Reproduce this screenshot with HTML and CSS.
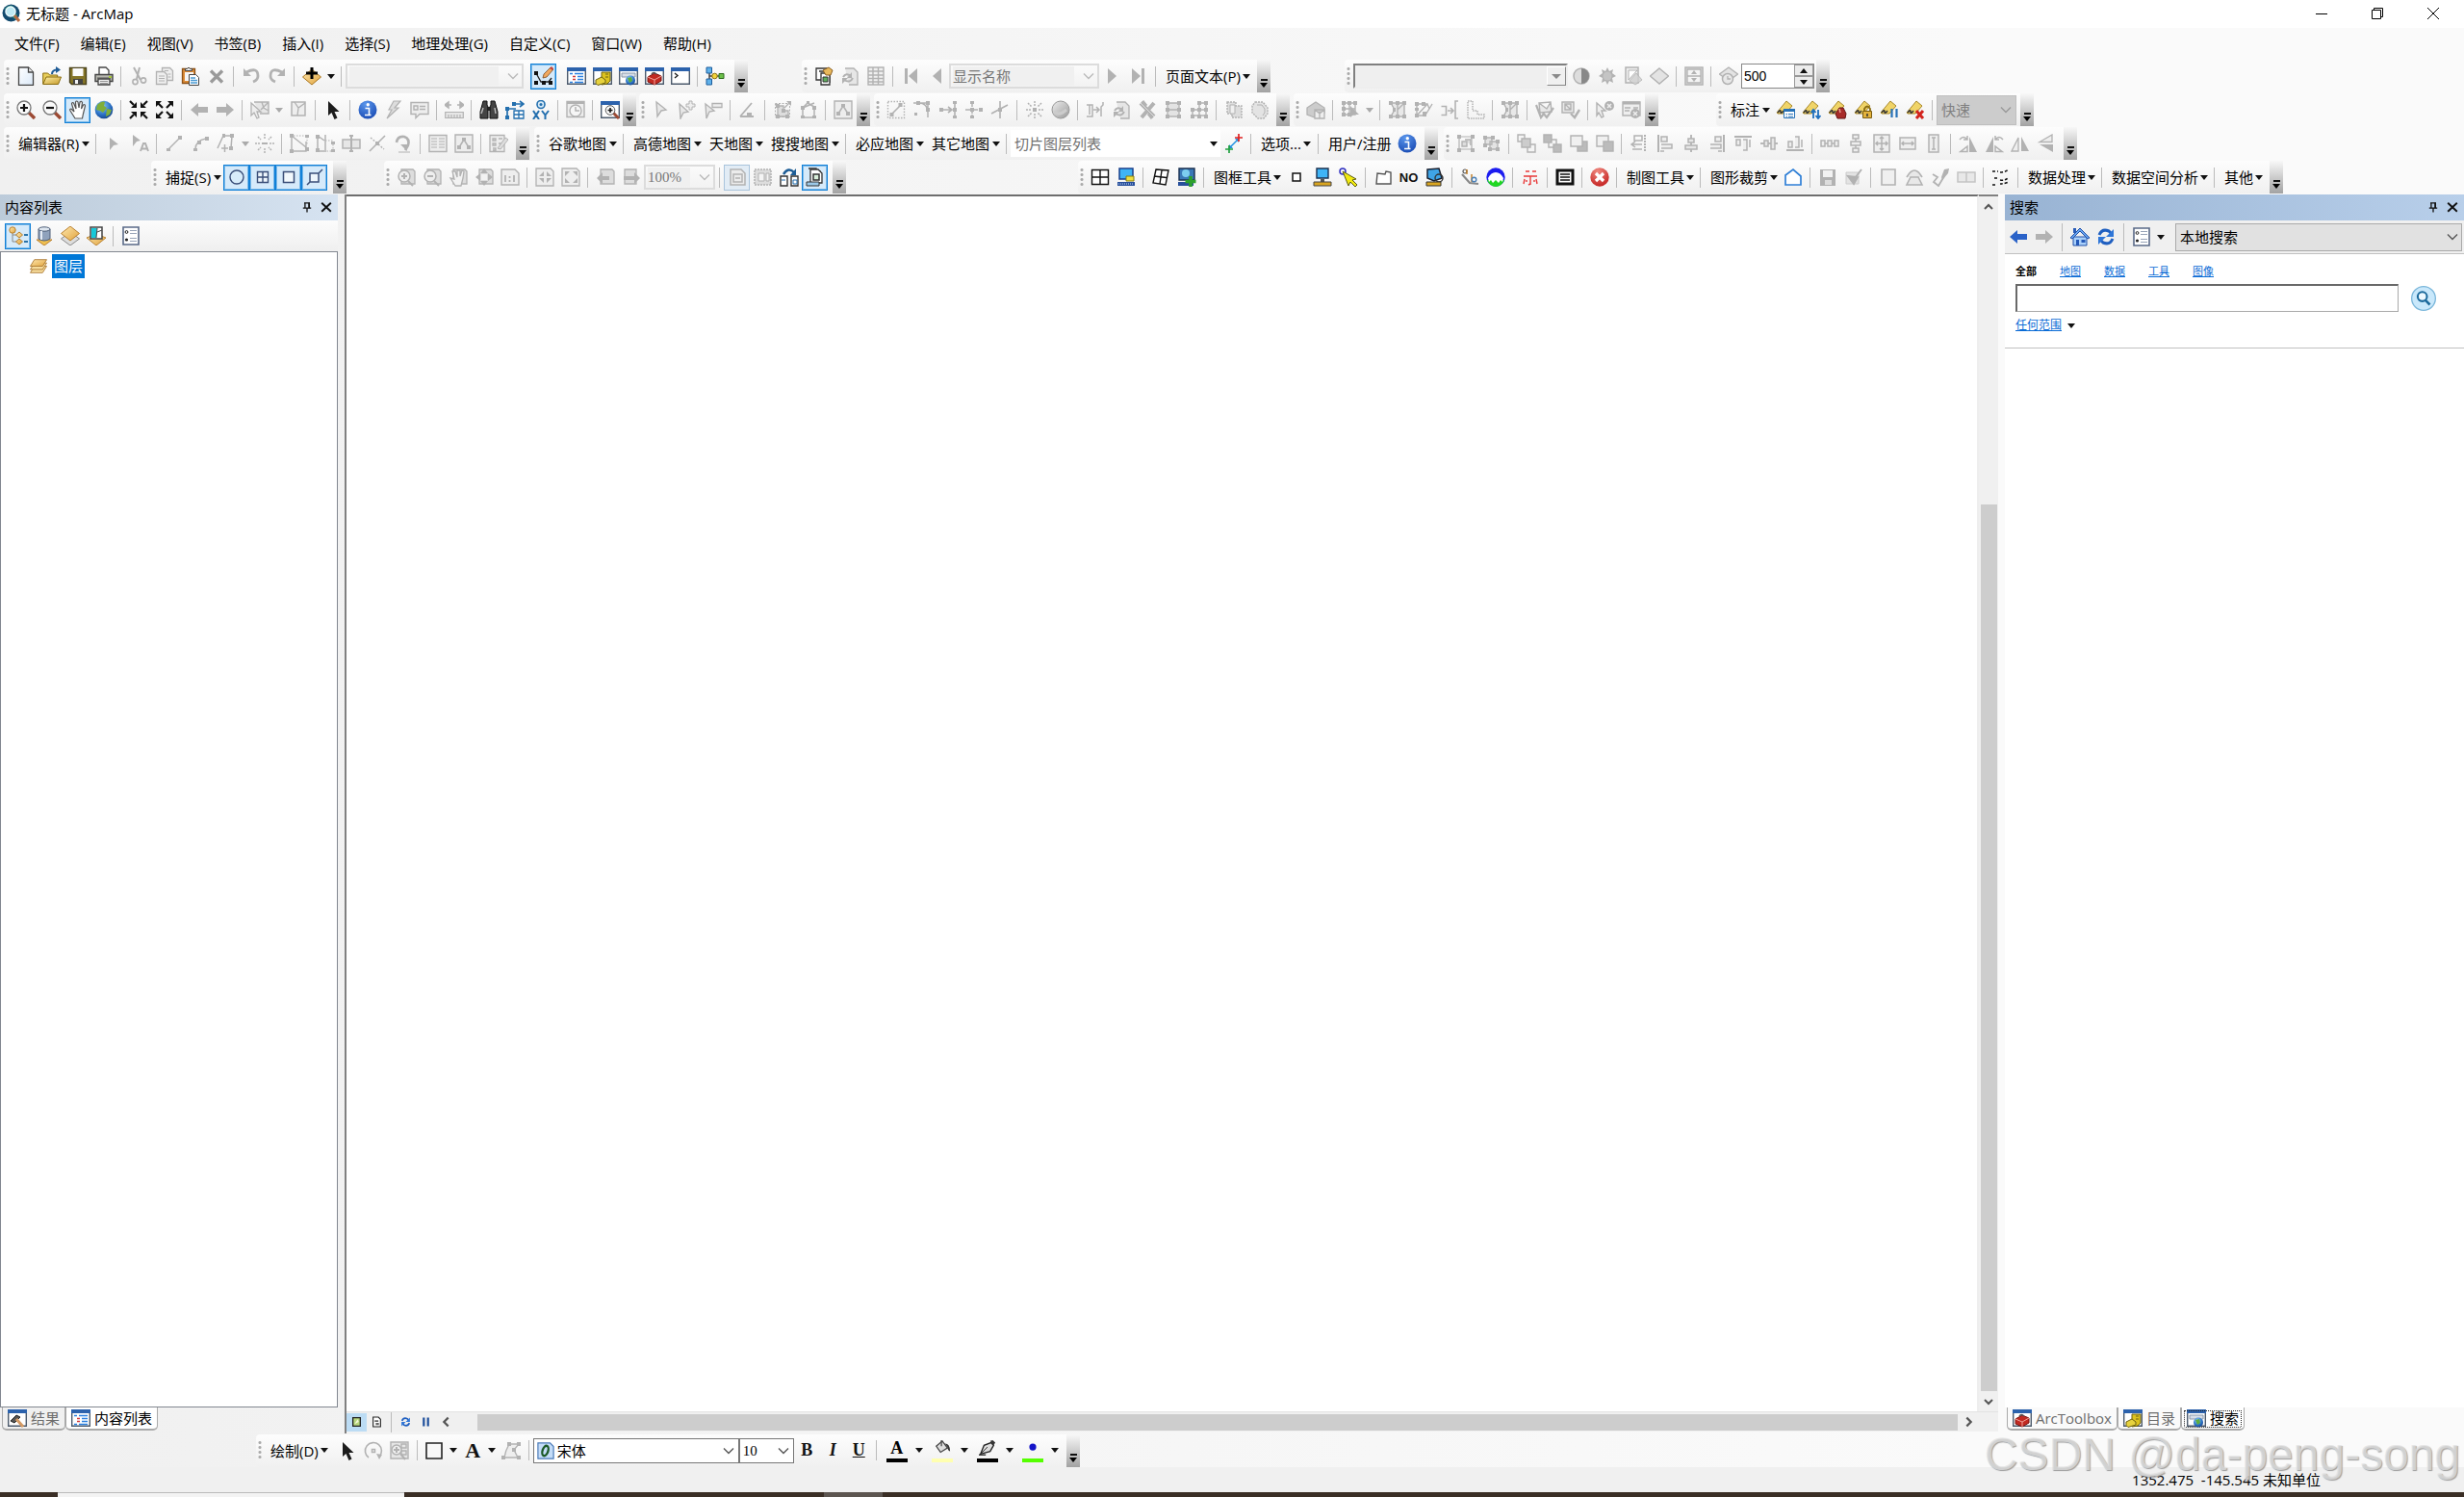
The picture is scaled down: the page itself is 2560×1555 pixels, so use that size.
FILE: index.html
```html
<!DOCTYPE html>
<html lang="zh-CN">
<head>
<meta charset="utf-8">
<title>无标题 - ArcMap</title>
<link rel="stylesheet" href="styles.css">
</head>
<body>
<svg class="defs" aria-hidden="true">
<defs>
<linearGradient id="gold" x1="0" y1="0" x2="1" y2="1"><stop offset="0" stop-color="#fdf0a8"/><stop offset="1" stop-color="#c79a2a"/></linearGradient>
<linearGradient id="sand" x1="0" y1="0" x2="1" y2="1"><stop offset="0" stop-color="#ffe9b0"/><stop offset="1" stop-color="#e0a23c"/></linearGradient>
<linearGradient id="page" x1="0" y1="0" x2="1" y2="1"><stop offset="0" stop-color="#fff"/><stop offset="1" stop-color="#dbe9f8"/></linearGradient>
<linearGradient id="grayfade" x1="0" y1="0" x2="1" y2="1"><stop offset="0" stop-color="#eee"/><stop offset="1" stop-color="#999"/></linearGradient>
<radialGradient id="sea" cx=".4" cy=".3" r=".8"><stop offset="0" stop-color="#8fd0f5"/><stop offset=".6" stop-color="#2a6fc4"/><stop offset="1" stop-color="#123a7c"/></radialGradient>
<radialGradient id="blue" cx=".4" cy=".2" r=".9"><stop offset="0" stop-color="#5a96ec"/><stop offset="1" stop-color="#1546b0"/></radialGradient>
<radialGradient id="red" cx=".4" cy=".2" r=".9"><stop offset="0" stop-color="#f08a80"/><stop offset="1" stop-color="#c01818"/></radialGradient>
</defs>
<symbol id="app" viewBox="0 0 20 20"><circle cx="9.500" cy="9.500" r="9" fill="#124a6e"/><path d="M3 5q4-4 8-3l2 4-4 3-4-1zM12 10l4 1-2 5-3-2z" fill="#2f9a86"/><circle cx="9" cy="8" r="5" fill="#bfe9f3" stroke="#eaf8fb" stroke-width="1.500"/><path d="M13 12l5 6" stroke="#b46a42" stroke-width="3"/></symbol>
<symbol id="new" viewBox="0 0 20 20"><path d="M2.500 1h10l5 5v13.300h-15z" fill="url(#page)" stroke="#444" stroke-width="1.300"/><path d="M12.500 1v5h5" fill="#eee" stroke="#444" stroke-width="1.300"/></symbol>
<symbol id="open" viewBox="0 0 20 20"><path d="M.7 18V7h5l2 2h8v2" fill="#e9cf5b" stroke="#8a6d10"/><path d="M.7 18.500 4 11h15.500l-3 7.500z" fill="url(#gold)" stroke="#8a6d10"/><path d="M14 0l5 3.500-5 3.500z" fill="#1f5c96"/><path d="M10 8q0-4 5-4.500" stroke="#1f5c96" stroke-width="2" fill="none"/></symbol>
<symbol id="save" viewBox="0 0 20 20"><path d="M1.500 1.500h17v17h-15l-2-2z" fill="#857528" stroke="#4b431c" stroke-width="1.400"/><path d="M4.500 2h11v8h-11z" fill="#fbfbfb"/><path d="M5 13h10v5.500H5z" fill="#444"/><path d="M7 14h3v4H7z" fill="#f3f3f3"/></symbol>
<symbol id="print" viewBox="0 0 20 20"><path d="M5 8V1h7l3 3v4" fill="#fff" stroke="#444" stroke-width="1.300"/><path d="M1 8.500h18v7H1z" fill="#b8b8b0" stroke="#444" stroke-width="1.400"/><path d="M3 12h14" stroke="#555"/><path d="M4 13h12v6H4z" fill="#eee" stroke="#444" stroke-width="1.300"/><path d="M15 10h3v2h-3z" fill="#a7c93c"/><path d="M6 15.500h8M6 17.500h8" stroke="#999"/></symbol>
<symbol id="cut" viewBox="0 0 20 20"><path d="M5 1l7 13M11 1L8 13" stroke="currentColor" stroke-width="2" fill="none"/><circle cx="6.500" cy="16" r="2.600" fill="none" stroke="currentColor" stroke-width="1.600"/><circle cx="15" cy="14.500" r="2.600" fill="none" stroke="currentColor" stroke-width="1.600"/></symbol>
<symbol id="copy" viewBox="0 0 20 20"><path d="M7.500 1.500h8l3 3v10h-11z" fill="#eee" stroke="currentColor" stroke-width="1.300"/><path d="M1.500 5.500h8l3 3v10h-11z" fill="#eee" stroke="currentColor" stroke-width="1.300"/><path d="M4 10h6M4 12.500h6M4 15h6M10 4.500h4M13.500 8h3M13.500 11h3" stroke="currentColor"/></symbol>
<symbol id="paste" viewBox="0 0 20 20"><path d="M1.500 2.500h13v15h-13z" fill="#dd8c37" stroke="#8c5219" stroke-width="1.300"/><path d="M4.500 4.500v-2h2q1.500-3 3 0h2v2z" fill="#eee" stroke="#444"/><path d="M4 6h9v9H4z" fill="#f6f6f6"/><path d="M8.500 8.500h7l3 3v8h-10z" fill="#fff" stroke="#444"/><path d="M10 12h5M10 14.500h7M10 17h7" stroke="#4a9ad4" stroke-width="1.300"/></symbol>
<symbol id="del" viewBox="0 0 20 20"><path d="M4 4.500l12 12M16 4.500l-12 12" stroke="#9a9a9a" stroke-width="3.400"/></symbol>
<symbol id="undo" viewBox="0 0 20 20"><path d="M5 6q12-6 12 4 0 4-5 6" fill="none" stroke="currentColor" stroke-width="2.800"/><path d="M2 2v8h8z" fill="currentColor"/></symbol>
<symbol id="redo" viewBox="0 0 20 20"><path d="M15 6Q3 0 3 10q0 4 5 6" fill="none" stroke="currentColor" stroke-width="2.800"/><path d="M18 2v8h-8z" fill="currentColor"/></symbol>
<symbol id="adddata" viewBox="0 0 20 20"><path d="M10 3l9.500 8-9.500 8-9.500-8z" fill="url(#sand)" stroke="#a9761f"/><path d="M10 1v12M4 7h12" stroke="#000" stroke-width="3"/></symbol>
<symbol id="edit" viewBox="0 0 20 20"><path d="M2 7l5 9h8l3-4" fill="none" stroke="#222" stroke-width="1.300"/><path d="M0 5h4v4H0zM0 15h4v4H0zM8 15h4v4H8zM15 15h4v4h-4z" fill="#111"/><path d="M9 12l1-4 7-7 3 2-7 8z" fill="#f0a860" stroke="#7a4a22" stroke-width=".8"/><path d="M16 2l3 2 1-2-2-2z" fill="#c8443c"/></symbol>
<symbol id="win" viewBox="0 0 20 20"><path d="M.7 1.700h18.600v16.600H.7z" fill="#fff" stroke="#4c5a6c" stroke-width="1.400"/><path d="M0 1h20v4H0z" fill="#2c62ac"/></symbol>
<symbol id="toc" viewBox="0 0 20 20"><use href="#win"/><path d="M6 10.500h3M6 13.500h3" stroke="#d23a3a" stroke-width="1.600"/><path d="M3 7.500h3M8 7.500h9M11 10.500h6M11 13.500h6M3 16.500h3M8 16.500h9" stroke="#2b80e0" stroke-width="1.600"/></symbol>
<symbol id="catalog" viewBox="0 0 20 20"><use href="#win"/><path d="M9 6h9v9l-3 3-6 1z" fill="#dcc21e" stroke="#6e6210"/><path d="M3 14l6-3 4 3v3l-8 2.500-2-2z" fill="#e7d23e" stroke="#6e6210"/><path d="M13 8h3M13 11h3" stroke="#6e6210"/></symbol>
<symbol id="searchwin" viewBox="0 0 20 20"><use href="#win"/><path d="M3 7h14v4H3z" fill="#d7dee8" stroke="#8a98aa"/><circle cx="12" cy="14.500" r="5" fill="url(#sea)"/><path d="M9 12l4-1 1 4-3 2z" fill="#5fae3c"/></symbol>
<symbol id="toolbox" viewBox="0 0 20 20"><use href="#win"/><path d="M3 11l7-4 7 3v5l-7 4-7-3z" fill="#c22a22" stroke="#7a1410"/><path d="M3 11l7 3 7-4M10 14v5" fill="none" stroke="#f0a098"/><path d="M7 8q2-3 5 0" fill="none" stroke="#555" stroke-width="1.400"/></symbol>
<symbol id="python" viewBox="0 0 20 20"><use href="#win"/><path d="M4 7l3 2.500L4 12" fill="none" stroke="#222" stroke-width="1.400"/></symbol>
<symbol id="model" viewBox="0 0 20 20"><path d="M4 4v12M4 10h12" stroke="#444" stroke-width="1.500"/><path d="M1 1h5.500v6H1zM1 13h5.500v6H1z" fill="#5fb1ea" stroke="#1d5d9c"/><circle cx="9.500" cy="10" r="2.800" fill="#f2d43a" stroke="#8a6d10"/><path d="M14 7.500h5v5h-5z" fill="#6cc04a" stroke="#2d6b1c"/></symbol>
<symbol id="zoomin" viewBox="0 0 20 20"><path d="M13 13l6 6" stroke="#9c4a34" stroke-width="3.400"/><circle cx="8" cy="8" r="7" fill="#fafafa" stroke="#777" stroke-width="1.300"/><path d="M8 4v8M4 8h8" stroke="#111" stroke-width="2.200"/></symbol>
<symbol id="zoomout" viewBox="0 0 20 20"><path d="M13 13l6 6" stroke="#9c4a34" stroke-width="3.400"/><circle cx="8" cy="8" r="7" fill="#fafafa" stroke="#777" stroke-width="1.300"/><path d="M4 8h8" stroke="#111" stroke-width="2.200"/></symbol>
<symbol id="pan" viewBox="0 0 20 20"><path d="M7 19l-5-8q-1-2 1-2l3 3L3.500 4q0-2 2-1L8 9 7.500 2q1-2 2.500 0l1 6 1-6q1.500-1.500 2.500.5L13.500 9l2-4q2-1 2 1l-2 8-1 5z" fill="#fff" stroke="#555" stroke-width="1.200"/></symbol>
<symbol id="globe" viewBox="0 0 20 20"><circle cx="10" cy="10" r="9.300" fill="url(#sea)"/><path d="M3 5q5-5 8-3l-1 4 3 2-4 5-3-2-4-1zM13 9l5 1-2 5-4 2z" fill="#7fae3a"/></symbol>
<symbol id="fixin" viewBox="0 0 20 20"><path d="M1 1l4 4M19 1l-4 4M1 19l4-4M19 19l-4-4" stroke="currentColor" stroke-width="2.200"/><path d="M8 2v6H2zM12 2v6h6zM8 18v-6H2zM12 18v-6h6z" fill="currentColor"/></symbol>
<symbol id="fixout" viewBox="0 0 20 20"><path d="M3 3l5 5M17 3l-5 5M3 17l5-5M17 17l-5-5" stroke="currentColor" stroke-width="2.200"/><path d="M1 7V1h6zM19 7V1h-6zM1 13v6h6zM19 13v6h-6z" fill="currentColor"/></symbol>
<symbol id="left" viewBox="0 0 20 20"><path d="M1 10l8-7v4h10v6H9v4z" fill="currentColor"/></symbol>
<symbol id="right" viewBox="0 0 20 20"><path d="M19 10l-8-7v4H1v6h10v4z" fill="currentColor"/></symbol>
<symbol id="selfeat" viewBox="0 0 20 20"><path d="M4 2h15v12h-9M19 2l-8 8M12 2l2 6 5 3" fill="#e6e6e6" stroke="currentColor" stroke-width="1.400"/><path d="M1 3l10 9H7l2 6-2 1-3-6-3 3z" fill="#eee" stroke="currentColor" stroke-width="1.300"/></symbol>
<symbol id="clearsel" viewBox="0 0 20 20"><path d="M3 2h14v14H3z" fill="#eee" stroke="currentColor" stroke-width="1.500"/><path d="M6 2l4 6 7-5M10 8l-1 8" fill="none" stroke="currentColor" stroke-width="1.300"/></symbol>
<symbol id="arrow" viewBox="0 0 20 20"><path d="M5 1v15l3.500-3 3 7 3-1.500-3-6.500h5z" fill="#1c1c1c"/></symbol>
<symbol id="info" viewBox="0 0 20 20"><circle cx="10" cy="10" r="9.500" fill="url(#blue)"/><path d="M7.500 8.500h4v7h2M7 15.500h6" fill="none" stroke="#fff" stroke-width="1.600"/><circle cx="10.300" cy="4.700" r="1.700" fill="#fff"/></symbol>
<symbol id="bolt" viewBox="0 0 20 20"><path d="M10 1h7l-6 7h4L3 19l5-9H5z" fill="#ddd" stroke="currentColor" stroke-width="1.200"/></symbol>
<symbol id="popup" viewBox="0 0 20 20"><path d="M1 2.500h18v12h-9l-4 4v-4H1z" fill="#eee" stroke="currentColor" stroke-width="1.400"/><path d="M4 6h4v4H4zM10 6.500h6M10 9.500h6" fill="none" stroke="currentColor" stroke-width="1.400"/></symbol>
<symbol id="measure" viewBox="0 0 20 20"><path d="M0 5l4-3v6zM20 5l-4-3v6zM2 5h5M13 5h5" fill="currentColor" stroke="currentColor" stroke-width="1.500"/><path d="M.7 12.500h18.600v6H.7zM4 15v3M7 15v3M10 15v3M13 15v3M16 15v3" fill="#e6e6e6" stroke="currentColor" stroke-width="1.200"/></symbol>
<symbol id="find" viewBox="0 0 20 20"><path d="M4 1h4v4l1 2v12H1v-7zM16 1h-4v4l-1 2v12h8v-7z" fill="#444" stroke="#111"/><path d="M8 7h4v4H8z" fill="#222"/><path d="M4 8l-2 6M16 8l1 6" stroke="#bbb" stroke-width="1.500"/></symbol>
<symbol id="route" viewBox="0 0 20 20"><path d="M2 18V9h9M8 4h10M15 1l4 3-4 3" fill="none" stroke="#236fae" stroke-width="1.700"/><path d="M0 7h4v4H0zM0 16h4v4H0zM7 2h4v4H7z" fill="#236fae"/><path d="M9 11h10v8H9zM9 15h10M14 11v8" fill="#fff" stroke="#236fae" stroke-width="1.300"/></symbol>
<symbol id="xy" viewBox="0 0 20 20"><circle cx="10" cy="4.500" r="4" fill="#d7eaf7" stroke="#236fae" stroke-width="1.600"/><circle cx="10" cy="4.500" r="1.500" fill="#236fae"/><path d="M2 11l6 9M8 11l-6 9M11 11l3.500 4.500V20M18 11l-3.500 4.500" fill="none" stroke="#236fae" stroke-width="2"/></symbol>
<symbol id="time" viewBox="0 0 20 20"><path d="M1 1.500h18v16H1z" fill="#eee" stroke="currentColor" stroke-width="1.400"/><circle cx="10" cy="11" r="6" fill="#f6f6f6" stroke="currentColor" stroke-width="1.400"/><path d="M10 7v4h4" fill="none" stroke="currentColor" stroke-width="1.500"/><path d="M1 3h18" stroke="currentColor" stroke-width="2"/></symbol>
<symbol id="viewer" viewBox="0 0 20 20"><use href="#win"/><path d="M13 13l6 6" stroke="#9c4a34" stroke-width="3"/><circle cx="10" cy="10.500" r="4.800" fill="#fafafa" stroke="#555"/><path d="M10 8v5M7.500 10.500h5" stroke="#111" stroke-width="1.600"/></symbol>
<symbol id="ptr" viewBox="0 0 20 20"><path d="M5 2l10 8-5 1-4 6z" fill="#e8e8e8" stroke="currentColor" stroke-width="1.400"/></symbol>
<symbol id="ptrplus" viewBox="0 0 20 20"><path d="M2 4l9 8-5 1-3 6z" fill="#e8e8e8" stroke="currentColor" stroke-width="1.400"/><path d="M12 1h3v3h3v3h-3v3h-3V7H9V4h3z" fill="#eee" stroke="currentColor"/></symbol>
<symbol id="ptrminus" viewBox="0 0 20 20"><path d="M2 4l9 7-5 1-3 7z" fill="#e8e8e8" stroke="currentColor" stroke-width="1.400"/><path d="M9 3.500h10v4H9z" fill="#eee" stroke="currentColor" stroke-width="1.300"/></symbol>
<symbol id="angle" viewBox="0 0 20 20"><path d="M2 17L14 3M2 17h14" stroke="currentColor" stroke-width="1.800"/><path d="M9 13h5v5H9z" fill="currentColor"/></symbol>
<symbol id="nodes" viewBox="0 0 20 20"><path d="M2.500 3.500h15v14h-15z" fill="none" stroke="currentColor" stroke-dasharray="2 1.500"/><path d="M5 6h6v5h5v6H5zM12 8l5-5" fill="#ddd" stroke="currentColor" stroke-width="1.300"/><path d="M3 4h4v4H3zM3 15h4v4H3zM13 15h4v4h-4zM14 1h5v5zM9 9h4v4H9z" fill="currentColor"/></symbol>
<symbol id="shape" viewBox="0 0 20 20"><path d="M4 18V8l5-5 7 4v11zM16 3L4 8" fill="none" stroke="currentColor" stroke-width="1.500"/><path d="M2 6h4v4H2zM2 16h4v3H2zM14 16h4v3h-4zM14 6h4v4h-4zM8 1h3v3H8z" fill="currentColor"/></symbol>
<symbol id="sketchbox" viewBox="0 0 20 20"><path d="M1 1h18v18H1z" fill="#ededed" stroke="currentColor" stroke-width="1.400"/><path d="M5 14l5-8 5 8" fill="none" stroke="currentColor" stroke-width="1.500"/><path d="M8 4h4v3H8zM3 12h4v4H3zM13 12h4v4h-4z" fill="currentColor"/></symbol>
<symbol id="ext" viewBox="0 0 20 20"><path d="M1.500 1.500h17v17h-17z" fill="none" stroke="currentColor" stroke-dasharray="1.500 1.500" stroke-width="1.400"/><path d="M5 15L15 5" stroke="currentColor" stroke-width="1.600"/><path d="M3.500 13h4v4h-4zM12.500 3h4v4h-4z" fill="currentColor"/></symbol>
<symbol id="fillet" viewBox="0 0 20 20"><path d="M1 3h5q10 0 10 10v5M6 3h12M16 3v8" fill="none" stroke="currentColor" stroke-width="1.500"/><path d="M4 1h4v4H4zM14 8h4v4h-4zM14 1h4v4h-4zM2 13h3v3H2z" fill="currentColor"/></symbol>
<symbol id="snapr" viewBox="0 0 20 20"><path d="M2 10h12M10 7l4 3-4 3M17 1v18" fill="none" stroke="currentColor" stroke-width="1.600"/><path d="M1 8h4v4H1zM15 1h4v3h-4zM15 16h4v3h-4zM15 8h4v4h-4z" fill="currentColor"/></symbol>
<symbol id="crossl" viewBox="0 0 20 20"><path d="M8 1v18M1 10h15" fill="none" stroke="currentColor" stroke-width="1.500" stroke-dasharray="6 1"/><path d="M6 1h4v3H6zM6 8h4v4H6zM15 8h4v4h-4zM6 16h4v3H6z" fill="currentColor"/></symbol>
<symbol id="xline" viewBox="0 0 20 20"><path d="M10 1v18M1 14L18 5" fill="none" stroke="currentColor" stroke-width="1.600"/><path d="M8 8h4v4H8z" fill="currentColor"/></symbol>
<symbol id="spray" viewBox="0 0 20 20"><path d="M10 1v5M10 14v5M1 10h5M14 10h5M3 3l4 4M17 3l-4 4M3 17l4-4M17 17l-4-4" stroke="currentColor" stroke-width="1.500" stroke-dasharray="2 1"/><path d="M8 8h4v4H8z" fill="currentColor"/></symbol>
<symbol id="ball" viewBox="0 0 20 20"><circle cx="10" cy="10" r="9" fill="url(#grayfade)" stroke="#999"/><path d="M3 12q5 5 13-2" fill="none" stroke="#ccc" stroke-width="3"/></symbol>
<symbol id="align1" viewBox="0 0 20 20"><path d="M1 5h6v12H1M4 5v10M8 10h6M11 7l3 3-3 3M18 2v3l-2 2v10" fill="none" stroke="currentColor" stroke-width="1.500"/></symbol>
<symbol id="pagerot" viewBox="0 0 20 20"><path d="M5 2h9l4 4v13H9" fill="#e6e6e6" stroke="currentColor" stroke-width="1.300"/><path d="M3 11q3-5 8-1M13 12q-3 6-9 2" fill="none" stroke="currentColor" stroke-width="2"/><path d="M12 6v6H7zM2 18v-6h6z" fill="currentColor"/></symbol>
<symbol id="wrench" viewBox="0 0 20 20"><path d="M3 3l14 14M17 3L4 18" stroke="currentColor" stroke-width="4"/><path d="M3 3l14 14" stroke="#ddd" stroke-width="1"/><path d="M5 1l4 5M11 14l4 5" stroke="currentColor" stroke-width="3"/></symbol>
<symbol id="boxnode" viewBox="0 0 20 20"><path d="M4 3h12v14H4zM4 10h12" fill="#e3e3e3" stroke="currentColor" stroke-width="1.300"/><path d="M2 1h4v4H2zM14 1h4v4h-4zM2 8h4v4H2zM14 8h4v4h-4zM2 15h4v4H2zM14 15h4v4h-4z" fill="currentColor"/></symbol>
<symbol id="boxnode2" viewBox="0 0 20 20"><path d="M3 10h14M3 16h14M3 10v6M10 3v14M17 3v14M10 3h7" fill="none" stroke="currentColor" stroke-width="1.400"/><path d="M8 1h4v4H8zM15 1h4v4h-4zM1 8h4v4H1zM8 8h4v4H8zM15 8h4v4h-4zM1 15h4v4H1zM8 15h4v4H8zM15 15h4v4h-4z" fill="currentColor"/></symbol>
<symbol id="union" viewBox="0 0 20 20"><path d="M3 2h9v4h6v12H8v-4H3z" fill="#ddd" stroke="currentColor" stroke-width="1.400" stroke-dasharray="2 1"/><path d="M6 5h5v9H6z" fill="#f0f0f0" stroke="currentColor"/></symbol>
<symbol id="octa" viewBox="0 0 20 20"><path d="M5 2h8l5 6v6l-4 5H8l-6-6V6z" fill="#e3e3e3" stroke="currentColor" stroke-width="1.400" stroke-dasharray="2 1"/><path d="M7 5h5l3 4v4l-2 3" fill="none" stroke="currentColor"/></symbol>
<symbol id="house" viewBox="0 0 20 20"><path d="M1 8l9-6 9 6v5H9v5l-8-3z" fill="#ccc" stroke="currentColor" stroke-width="1.300"/><path d="M9 10h10v9H9zM9 10l5 4 5-4M14 14v5" fill="#eee" stroke="currentColor" stroke-width="1.300"/></symbol>
<symbol id="topo" viewBox="0 0 20 20"><path d="M3 3h14v14H3l4-7z" fill="#e8e8e8" stroke="currentColor" stroke-width="1.400"/><path d="M10 3v14M10 10l7-7" stroke="currentColor" stroke-width="1.400"/><path d="M1 1h4v4H1zM8 1h4v4H8zM15 1h4v4h-4zM1 15h4v4H1zM8 15h4v4H8zM15 15h4v4h-4zM5 8h3v4H5z" fill="currentColor"/></symbol>
<symbol id="topoptr" viewBox="0 0 20 20"><path d="M3 3h12v12H3zM3 9h12M9 3v12" fill="none" stroke="currentColor" stroke-width="1.400"/><path d="M1 1h4v4H1zM7 1h4v4H7zM13 1h4v4h-4zM1 7h4v4H1zM1 13h4v4H1zM7 13h4v4H7z" fill="currentColor"/><path d="M10 6v12l3-3h6z" fill="currentColor"/></symbol>
<symbol id="topopen" viewBox="0 0 20 20"><path d="M3 4h11M3 4v12h8M3 16L14 4l2 5 3-5-8 13" fill="none" stroke="currentColor" stroke-width="1.400"/><path d="M1 2h4v4H1zM8 2h4v4H8zM1 14h4v4H1zM9 12h4v5H9zM1 8h4v3H1z" fill="currentColor"/></symbol>
<symbol id="dline" viewBox="0 0 20 20"><path d="M1.500 6.500h5v9h-5M8 11h5M11 8l3 3-3 3M19 1h-3v18h3" fill="none" stroke="currentColor" stroke-width="1.600"/></symbol>
<symbol id="stairs" viewBox="0 0 20 20"><path d="M2 1h5v10h5v4h7v4H2z" fill="none" stroke="currentColor" stroke-width="1.500" stroke-dasharray="1.500 1"/></symbol>
<symbol id="topook" viewBox="0 0 20 20"><path d="M4 3l12-1 1 10-12 1zM4 3l8 6 4-7" fill="#e8e8e8" stroke="currentColor" stroke-width="1.400"/><path d="M1 5l5 13 3-4M8 13l4 5 7-10" fill="none" stroke="currentColor" stroke-width="2.200"/></symbol>
<symbol id="topook2" viewBox="0 0 20 20"><path d="M1 2h12v11H1zM4 4h6v6H4zM4 4l6 6" fill="#e8e8e8" stroke="currentColor" stroke-width="1.400"/><path d="M10 14l4 4 5-8" fill="none" stroke="currentColor" stroke-width="2.400"/></symbol>
<symbol id="errptr" viewBox="0 0 20 20"><path d="M1 3l9 8H6l2 6-2 1-3-5-2 3z" fill="#eee" stroke="currentColor" stroke-width="1.400"/><circle cx="14" cy="6" r="5" fill="currentColor"/><path d="M12 4l4 4M16 4l-4 4" stroke="#eee" stroke-width="1.500"/></symbol>
<symbol id="errwin" viewBox="0 0 20 20"><path d="M1 2h18v14H1zM3 8h6M3 11h5M12 8h5" fill="#eee" stroke="currentColor" stroke-width="1.400"/><path d="M1 3h18" stroke="currentColor" stroke-width="3"/><circle cx="14" cy="14" r="5" fill="currentColor"/><path d="M12 12l4 4M16 12l-4 4" stroke="#eee" stroke-width="1.500"/></symbol>
<symbol id="tag" viewBox="0 0 20 20"><path d="M1 13L11 1l6 5-7 8H2z" fill="#f0d468" stroke="#a8882a"/><path d="M2 13q3-4 3-1t3-1" fill="none" stroke="#333" stroke-width="1.500"/></symbol>
<symbol id="tag1" viewBox="0 0 20 20"><use href="#tag"/><path d="M8.500 9.500h11v9h-11z" fill="#fff" stroke="#2872b8"/><path d="M8 9h12v3H8z" fill="#2872b8"/><path d="M10.500 14.500h1.500M10.500 17h1.500M13 14.500h5M13 17h5" stroke="#2872b8"/></symbol>
<symbol id="tag2" viewBox="0 0 20 20"><use href="#tag"/><path d="M12 19v-8M9.500 13L12 10l2.500 3M17 10v8M14.500 16l2.500 3 2.500-3" fill="none" stroke="#1d6fbe" stroke-width="1.800"/></symbol>
<symbol id="tag3" viewBox="0 0 20 20"><use href="#tag"/><path d="M8 14l4-6h4l3 6-1 5H10z" fill="#a82c2a" stroke="#641412"/><path d="M12 9l1 4" stroke="#e89a90" stroke-width="1.500"/></symbol>
<symbol id="tag4" viewBox="0 0 20 20"><use href="#tag"/><path d="M11 12V9q3-5 6 0v3" fill="none" stroke="#8a6d10" stroke-width="1.800"/><path d="M9.500 11.500h9v7h-9z" fill="#e3b23c" stroke="#7a5c10"/><path d="M14 14v3" stroke="#333" stroke-width="1.500"/></symbol>
<symbol id="tag5" viewBox="0 0 20 20"><use href="#tag"/><path d="M12.500 9v9M17.500 9v9" stroke="#2872b8" stroke-width="2.200"/></symbol>
<symbol id="tag6" viewBox="0 0 20 20"><use href="#tag"/><path d="M11 11l7 8M18 11l-7 8" stroke="#d2231c" stroke-width="3"/></symbol>
<symbol id="dd1" viewBox="0 0 20 20"><path d="M2 2h11v12H2zM5 5h11v12" fill="#fff" stroke="#333" stroke-width="1.300"/><path d="M7 7h9v12H7z" fill="#fff" stroke="#333" stroke-width="1.300"/><path d="M9 11h5v5H9z" fill="#5fae5c" stroke="#333"/><path d="M9 4l6-3 4 3-2 5h-5z" fill="#e9b95c" stroke="#8a5d20"/></symbol>
<symbol id="table" viewBox="0 0 20 20"><path d="M2 1h16v18H2zM2 5h16M2 9h16M2 12.500h16M2 16h16M7 1v18M12.500 1v18" fill="#f0f0f0" stroke="currentColor" stroke-width="1.400"/></symbol>
<symbol id="first" viewBox="0 0 20 20"><path d="M4 2h3v16H4zM17 2v16l-9-8z" fill="currentColor"/></symbol>
<symbol id="prev" viewBox="0 0 20 20"><path d="M15 2v16l-9-8z" fill="currentColor"/></symbol>
<symbol id="next" viewBox="0 0 20 20"><path d="M5 2v16l9-8z" fill="currentColor"/></symbol>
<symbol id="last" viewBox="0 0 20 20"><path d="M13 2h3v16h-3zM3 2v16l9-8z" fill="currentColor"/></symbol>
<symbol id="contrast" viewBox="0 0 20 20"><circle cx="10" cy="10" r="8" fill="#ddd" stroke="currentColor" stroke-width="1.500"/><path d="M10 2a8 8 0 010 16z" fill="#888"/></symbol>
<symbol id="sun" viewBox="0 0 20 20"><path d="M10 1l2 4 4-2-1 4 4 3-4 2 1 5-4-2-2 4-2-4-4 2 1-5-4-2 4-3-1-4 4 2z" fill="currentColor"/><circle cx="10" cy="10" r="4.500" fill="#c4c4c4"/></symbol>
<symbol id="trans" viewBox="0 0 20 20"><path d="M2 1h13v16H2z" fill="#eee" stroke="currentColor" stroke-width="1.500"/><path d="M5 4h9L5 14z" fill="#fff" stroke="currentColor"/><path d="M13 7l6 7-7 5-6-4z" fill="#d0d0d0" stroke="currentColor" opacity=".8"/></symbol>
<symbol id="diamond" viewBox="0 0 20 20"><path d="M10 2l9.500 8-9.500 8-9.500-8z" fill="#e3e3e3" stroke="currentColor" stroke-width="1.400"/></symbol>
<symbol id="swipe" viewBox="0 0 20 20"><path d="M1 1h18v18H1z" fill="#e6e6e6" stroke="currentColor" stroke-width="1.500"/><path d="M3 3h14v14H3zM3 10h14" fill="#f4f4f4" stroke="currentColor" stroke-width="1.300"/><path d="M10 4l3 4H7zM10 16l3-4H7z" fill="currentColor"/></symbol>
<symbol id="flicker" viewBox="0 0 20 20"><path d="M10 1l9.500 7-9.500 7L.5 8z" fill="#e3e3e3" stroke="currentColor" stroke-width="1.300"/><circle cx="9" cy="13" r="5.500" fill="#e8e8e8" stroke="currentColor" stroke-width="1.500"/><path d="M9 10v3h3" fill="none" stroke="currentColor" stroke-width="1.300"/></symbol>
<symbol id="eptr" viewBox="0 0 20 20"><path d="M6 4l9 7-5 1-4 5z" fill="currentColor"/></symbol>
<symbol id="eptra" viewBox="0 0 20 20"><path d="M3 1l8 6-4 1-4 5z" fill="currentColor"/><path d="M11 18l3-8h2l3 8M12.500 15.500h5" fill="none" stroke="currentColor" stroke-width="2"/></symbol>
<symbol id="seg" viewBox="0 0 20 20"><path d="M4 16L16 4" stroke="currentColor" stroke-width="1.400"/><path d="M2 15h4v3H2zM14 2h4v4h-4z" fill="currentColor"/></symbol>
<symbol id="arc" viewBox="0 0 20 20"><path d="M5 16q0-9 11-11" fill="none" stroke="currentColor" stroke-width="1.400"/><path d="M3 15h4v3H3zM15 3h4v4h-4zM7 7h4v4H7z" fill="currentColor"/></symbol>
<symbol id="trace" viewBox="0 0 20 20"><path d="M1 15L7 2h9l-1 13M5 15h7M8.500 11v8" fill="none" stroke="currentColor" stroke-width="1.500"/><path d="M6 0h3v4H6zM14 0h4v4h-4zM13 13h4v4h-4z" fill="currentColor"/></symbol>
<symbol id="burst" viewBox="0 0 20 20"><path d="M10 0v5M10 15v5M0 10h5M15 10h5M3 3l3 3M17 3l-3 3M3 17l3-3M17 17l-3-3" stroke="currentColor" stroke-width="1.500" stroke-dasharray="2 1"/><path d="M7 9h6v2H7z" fill="currentColor"/></symbol>
<symbol id="reshape" viewBox="0 0 20 20"><path d="M2 2v16h15V8M2 2l15 12" fill="none" stroke="currentColor" stroke-width="1.400"/><path d="M4 2h14v10" fill="none" stroke="currentColor" stroke-dasharray="1.500 1.500"/><path d="M0 0h4v4H0zM0 16h4v4H0zM16 1h4v3h-4zM16 14h4v4h-4z" fill="currentColor"/></symbol>
<symbol id="cutpoly" viewBox="0 0 20 20"><path d="M2 2v16h7M2 2l7 5M10 1v18" fill="none" stroke="currentColor" stroke-width="1.500"/><path d="M10 7h8v11h-8" fill="none" stroke="currentColor" stroke-dasharray="1.500 1.500"/><path d="M0 1h4v4H0zM0 15h4v4H0zM16 8h4v3h-4zM16 16h4v3h-4z" fill="currentColor"/></symbol>
<symbol id="split" viewBox="0 0 20 20"><path d="M1 6h18v9H1z" fill="#e6e6e6" stroke="currentColor" stroke-width="1.500"/><path d="M10 1v18M8 2h4M8 18h4" stroke="currentColor" stroke-width="2"/></symbol>
<symbol id="crossx" viewBox="0 0 20 20"><path d="M18 2L2 18" stroke="currentColor" stroke-width="1.600"/><path d="M3 4l14 12" stroke="currentColor" stroke-dasharray="2 1.500" stroke-width="1.400"/><path d="M8 8h4v4H8z" fill="currentColor"/></symbol>
<symbol id="rot" viewBox="0 0 20 20"><path d="M3 9q1-7 8-6 6 2 4 9l-3 5" fill="none" stroke="currentColor" stroke-width="2.600"/><path d="M7 11h7v7z" fill="currentColor"/><path d="M5 19h12" stroke="currentColor"/></symbol>
<symbol id="attr" viewBox="0 0 20 20"><path d="M1 1.500h18v17H1z" fill="#ededed" stroke="currentColor" stroke-width="1.400"/><path d="M3 5h6M3 8h6M3 11h6M3 14h6M11 5h6M11 8h6M11 11h6M11 14h6" stroke="currentColor" stroke-width="1.200"/></symbol>
<symbol id="create" viewBox="0 0 20 20"><path d="M1 1.500h15v17H1zM4 5h3v2H4zM4 10h3v2H4zM4 15h3v2H4M10 5h4M10 10h4" fill="#ededed" stroke="currentColor" stroke-width="1.300"/><path d="M9 15l8-11 3 2-8 10z" fill="#ddd" stroke="currentColor"/></symbol>
<symbol id="diag" viewBox="0 0 20 20"><path d="M5 15L15 5" stroke="#1d8fe0" stroke-width="1.500"/><path d="M11 5h4v4zM5 11v4h4z" fill="#1d8fe0"/><path d="M15 0v8M11 4h8" stroke="#e02020" stroke-width="1.700"/><path d="M5 12v8M1 16h8" stroke="#20a040" stroke-width="1.700"/></symbol>
<symbol id="group" viewBox="0 0 20 20"><path d="M3 3h13v13H3z" fill="none" stroke="currentColor" stroke-width="1.200"/><path d="M1 1h4v4H1zM15 1h4v4h-4zM1 15h4v4H1zM15 15h4v4h-4z" fill="currentColor"/><path d="M6 8h5v5H6zM9 6h6v6" fill="#ddd" stroke="currentColor" stroke-width="1.400"/></symbol>
<symbol id="ungroup" viewBox="0 0 20 20"><path d="M3 4h7v7H3zM8 8h8v8H8z" fill="#e3e3e3" stroke="currentColor" stroke-width="1.300"/><path d="M1 2h4v4H1zM9 2h4v4H9zM1 10h4v4H1zM14 6h4v4h-4zM6 14h4v4H6zM14 14h4v4h-4z" fill="currentColor"/></symbol>
<symbol id="ord1" viewBox="0 0 20 20"><path d="M1 1h7v7H1zM11 11h8v8h-8z" fill="#f4f4f4" stroke="currentColor" stroke-width="1.400"/><path d="M5 5h9v9H5z" fill="#ccc" stroke="currentColor" stroke-width="1.400"/></symbol>
<symbol id="ord2" viewBox="0 0 20 20"><path d="M6 6h8v8H6z" fill="#f4f4f4" stroke="currentColor" stroke-width="1.400"/><path d="M1 1h8v8H1zM11 11h8v8h-8z" fill="#bbb" stroke="currentColor" stroke-width="1.400"/></symbol>
<symbol id="ord3" viewBox="0 0 20 20"><path d="M9 8h10v10H9z" fill="#bbb" stroke="currentColor" stroke-width="1.400"/><path d="M2 2h12v11H2z" fill="#f0f0f0" stroke="currentColor" stroke-width="1.400"/></symbol>
<symbol id="ord4" viewBox="0 0 20 20"><path d="M2 2h12v11H2z" fill="#f0f0f0" stroke="currentColor" stroke-width="1.400"/><path d="M9 8h10v10H9z" fill="#bbb" stroke="currentColor" stroke-width="1.400"/></symbol>
<symbol id="al0" viewBox="0 0 20 20"><path d="M5 2h8v5H5zM3 11h10M6 8l-4 3 4 3M3 16h10" fill="none" stroke="currentColor" stroke-width="1.500"/><path d="M16 1v18" stroke="currentColor" stroke-width="2" stroke-dasharray="2 1"/></symbol>
<symbol id="all" viewBox="0 0 20 20"><path d="M3 1v18" stroke="currentColor" stroke-width="2"/><path d="M6 3h6v5H6zM6 11h11v4H6M9 18H5" fill="#eee" stroke="currentColor" stroke-width="1.500"/></symbol>
<symbol id="alc" viewBox="0 0 20 20"><path d="M10 1v18" stroke="currentColor" stroke-width="1.800"/><path d="M7 5h6v4H7zM4 12h12v4H4z" fill="#e6e6e6" stroke="currentColor" stroke-width="1.500"/></symbol>
<symbol id="alr" viewBox="0 0 20 20"><path d="M17 1v18" stroke="currentColor" stroke-width="2"/><path d="M8 3h6v5H8zM3 11h11v4H3M11 18h4" fill="#eee" stroke="currentColor" stroke-width="1.500"/></symbol>
<symbol id="alt" viewBox="0 0 20 20"><path d="M1 3h18" stroke="currentColor" stroke-width="2"/><path d="M3 6h4v6H3zM10 6h4v11h-4M17 6v8" fill="#eee" stroke="currentColor" stroke-width="1.500"/></symbol>
<symbol id="alm" viewBox="0 0 20 20"><path d="M1 10h18" stroke="currentColor" stroke-width="1.800"/><path d="M5 7h4v6H5zM12 4h4v12h-4z" fill="#e6e6e6" stroke="currentColor" stroke-width="1.500"/></symbol>
<symbol id="alb" viewBox="0 0 20 20"><path d="M1 17h18" stroke="currentColor" stroke-width="2"/><path d="M3 8h4v6H3zM10 3h4v11h-4M17 6v8" fill="#eee" stroke="currentColor" stroke-width="1.500"/></symbol>
<symbol id="dish" viewBox="0 0 20 20"><path d="M1 7h4v6H1zM8 7h4v6H8zM15 7h4v6h-4zM5 10h3M12 10h3" fill="#eee" stroke="currentColor" stroke-width="1.500"/></symbol>
<symbol id="disv" viewBox="0 0 20 20"><path d="M7 1h6v4H7zM5 8h10v4H5zM7 15h6v4H7zM10 5v3M10 12v3" fill="#eee" stroke="currentColor" stroke-width="1.500"/></symbol>
<symbol id="same" viewBox="0 0 20 20"><path d="M2 1h16v18H2zM10 3v14M4 10h12M8 5l2-2 2 2M8 15l2 2 2-2M6 8l-2 2 2 2M14 8l2 2-2 2" fill="#eee" stroke="currentColor" stroke-width="1.500"/></symbol>
<symbol id="samew" viewBox="0 0 20 20"><path d="M2 4h16v12H2zM4 10h12M6 8l-2 2 2 2M14 8l2 2-2 2" fill="#eee" stroke="currentColor" stroke-width="1.500"/></symbol>
<symbol id="sameh" viewBox="0 0 20 20"><path d="M5 1h10v18H5zM10 4v12M8 4h4M8 16h4" fill="#eee" stroke="currentColor" stroke-width="1.500"/></symbol>
<symbol id="rotr" viewBox="0 0 20 20"><path d="M11 3v16h8z" fill="currentColor"/><path d="M9 13v5.500H2zM1 6q4-5 8 0M9 2v4H5" fill="none" stroke="currentColor" stroke-width="1.500"/></symbol>
<symbol id="rotl" viewBox="0 0 20 20"><path d="M9 3v16H1z" fill="currentColor"/><path d="M11 13v5.500h7zM19 6q-4-5-8 0M11 2v4h4" fill="none" stroke="currentColor" stroke-width="1.500"/></symbol>
<symbol id="fliph" viewBox="0 0 20 20"><path d="M11 3v15h8z" fill="currentColor"/><path d="M8 4v14H1z" fill="#eee" stroke="currentColor" stroke-width="1.300"/></symbol>
<symbol id="flipv" viewBox="0 0 20 20"><path d="M3 11h14v8z" fill="currentColor"/><path d="M3 8.500h13V1z" fill="#eee" stroke="currentColor" stroke-width="1.300"/></symbol>
<symbol id="pt" viewBox="0 0 20 20"><circle cx="10" cy="10" r="7" fill="#d8ecfa" stroke="#3a4e78" stroke-width="1.400"/></symbol>
<symbol id="grid" viewBox="0 0 20 20"><path d="M4.500 4.500h11v11h-11zM10 4v12M4 10h12" fill="#eef6fc" stroke="#3a4e78" stroke-width="1.400"/></symbol>
<symbol id="sq" viewBox="0 0 20 20"><path d="M4.500 4.500h11v11h-11z" fill="#f2f8fc" stroke="#3a4e78" stroke-width="1.500"/></symbol>
<symbol id="edge" viewBox="0 0 20 20"><path d="M5 6h9v9H5zM2 18l3-3M14 6l4-4" fill="#eef6fc" stroke="#3a4e78" stroke-width="1.500"/></symbol>
<symbol id="pg" viewBox="0 0 20 20"><path d="M5 2h12l2 2v13H5z" fill="#ddd" stroke="currentColor" stroke-width="1.300"/></symbol>
<symbol id="pgin" viewBox="0 0 20 20"><use href="#pg"/><circle cx="8" cy="9" r="6" fill="#eee" stroke="currentColor" stroke-width="1.500"/><path d="M8 6v6M5 9h6M12 14l5 5" stroke="currentColor" stroke-width="2"/></symbol>
<symbol id="pgout" viewBox="0 0 20 20"><use href="#pg"/><circle cx="8" cy="9" r="6" fill="#eee" stroke="currentColor" stroke-width="1.500"/><path d="M5 9h6M12 14l5 5" stroke="currentColor" stroke-width="2"/></symbol>
<symbol id="pgpan" viewBox="0 0 20 20"><use href="#pg"/><path d="M7 19l-5-8 4 1-2-8 3 0 2 6V3h3v6l2-6 2 1-1 7-2 8z" fill="#f2f2f2" stroke="currentColor" stroke-width="1.300"/></symbol>
<symbol id="pgall" viewBox="0 0 20 20"><use href="#pg"/><path d="M10 1l4 5H6zM10 19l4-5H6zM1 10l5-4v8zM19 10l-5-4v8z" fill="currentColor"/><path d="M7 7h6v6H7z" fill="#f2f2f2"/></symbol>
<symbol id="pg11" viewBox="0 0 20 20"><path d="M1 2h14l4 4v12H1z" fill="#eee" stroke="currentColor" stroke-width="1.400"/><path d="M5 8v7M14 8v7M9.500 9v2M9.500 13v2" stroke="currentColor" stroke-width="1.800"/></symbol>
<symbol id="pgfi" viewBox="0 0 20 20"><path d="M1 1h15l3 3v15H1z" fill="#eee" stroke="currentColor" stroke-width="1.300"/><path d="M9 4v5H4zM12 4v5h5zM9 16v-5H4zM12 16v-5h5z" fill="currentColor"/></symbol>
<symbol id="pgfo" viewBox="0 0 20 20"><path d="M1 1h15l3 3v15H1z" fill="#eee" stroke="currentColor" stroke-width="1.300"/><path d="M4 9V4h5zM17 9V4h-5zM4 11v5h5zM17 11v5h-5z" fill="currentColor"/></symbol>
<symbol id="pgl" viewBox="0 0 20 20"><use href="#pg"/><path d="M1 11l6-6v4h7v4H7v4z" fill="currentColor"/></symbol>
<symbol id="pgr" viewBox="0 0 20 20"><path d="M3 2h12v15H3z" fill="#ddd" stroke="currentColor" stroke-width="1.300"/><path d="M19 11l-6-6v4H2v4h11v4z" fill="currentColor"/></symbol>
<symbol id="draft" viewBox="0 0 20 20"><path d="M3 2h11l4 4v12H3z" fill="#ececec" stroke="currentColor" stroke-width="1.500"/><path d="M6 7h9v8H6zM8 11h5" fill="none" stroke="currentColor" stroke-width="1.500"/></symbol>
<symbol id="focus" viewBox="0 0 20 20"><path d="M1 2h17v16H1z" fill="#ddd" stroke="currentColor" stroke-width="1.500" stroke-dasharray="2 1"/><path d="M5 6h6v8H5zM13 6h3v8h-3z" fill="#f4f4f4" stroke="currentColor"/></symbol>
<symbol id="layoutch" viewBox="0 0 20 20"><path d="M1 9h7v10H1zM12 9h7v10h-7z" fill="#fff" stroke="#333" stroke-width="1.400"/><path d="M2 13h4M14 13h4v4h-4z" stroke="#236fae" fill="none"/><path d="M4 7q5-8 11-2" fill="none" stroke="#1d5d96" stroke-width="2.400"/><path d="M17 1v7h-6z" fill="#1d5d96"/></symbol>
<symbol id="ddpage" viewBox="0 0 20 20"><path d="M3 1h8v4M6 4h9v4" fill="#fff" stroke="#333" stroke-width="1.300"/><path d="M5 2h8l4 4v10H5z" fill="#fff" stroke="#333" stroke-width="1.300"/><path d="M8 7h6v6H8z" fill="#d8eeda" stroke="#333" stroke-width="1.500"/><path d="M1 15h13v4H1z" fill="#9cc9e8" stroke="#333"/></symbol>
<symbol id="four" viewBox="0 0 20 20"><path d="M1.500 2.500h17v15h-17zM10 2v16M1 10h18" fill="#fff" stroke="#111" stroke-width="1.400"/></symbol>
<symbol id="foursk" viewBox="0 0 20 20"><path d="M5 2l13 1-3 15-13-2zM11 3L9 17M3 9l13 1.500" fill="#fff" stroke="#111" stroke-width="1.400"/></symbol>
<symbol id="pc" viewBox="0 0 20 20"><path d="M3 1h14v11H3z" fill="#3fb4f6" stroke="#1a3f8c" stroke-width="1.500"/><path d="M1 15h18v4H1z" fill="#274f9c"/><path d="M2 17h16" stroke="#cfe0f6" stroke-dasharray="1 1"/><path d="M10 9h8v5h-8z" fill="#f0e040" stroke="#857a10"/></symbol>
<symbol id="pcadd" viewBox="0 0 20 20"><path d="M2 1h16v12H2z" fill="#3a78b8" stroke="#1a3050" stroke-width="1.400"/><circle cx="9" cy="6" r="4" fill="#7ccdf0"/><path d="M1 15h16v4H1z" fill="#274f9c"/><path d="M14 9v11M8.500 14.500h11" stroke="#2ca02c" stroke-width="3.600"/></symbol>
<symbol id="small" viewBox="0 0 20 20"><path d="M6 6h8v8H6z" fill="#fff" stroke="#111" stroke-width="1.500"/></symbol>
<symbol id="pcnet" viewBox="0 0 20 20"><path d="M4 1h12v10H4z" fill="#3fb4f6" stroke="#1a3050" stroke-width="1.400"/><path d="M8 12h4v4H8z" fill="#555"/><path d="M1 15h18v4H1z" fill="#d9a520" stroke="#444"/></symbol>
<symbol id="ylw" viewBox="0 0 20 20"><circle cx="4" cy="4" r="3" fill="none" stroke="#3030c0" stroke-width="1.500"/><path d="M4 4l14 8-4 1 5 5-2 2-5-5-2 4z" fill="#f2ea10" stroke="#5a5a10"/></symbol>
<symbol id="poly" viewBox="0 0 20 20"><path d="M3 17l1-11 8 1 1-3 5 1v12z" fill="#fff" stroke="#555" stroke-width="1.400"/></symbol>
<symbol id="pcq" viewBox="0 0 20 20"><path d="M2 2l12-1 3 10-8 3-7-3z" fill="#3fa4e6" stroke="#1a2030" stroke-width="1.500"/><circle cx="14" cy="11" r="4" fill="none" stroke="#333" stroke-width="1.400"/><path d="M1 15h15v4H1z" fill="#d9a520" stroke="#333"/></symbol>
<symbol id="ab" viewBox="0 0 20 20"><path d="M2 7l8 9 9 1" fill="none" stroke="#888" stroke-width="2.200"/><circle cx="5" cy="4" r="2" fill="none" stroke="#555" stroke-width="1.200"/><path d="M7 2v5M12 7v8" stroke="#c07a20" stroke-width="1.400"/><circle cx="14.500" cy="12.500" r="2.300" fill="none" stroke="#4a80b8" stroke-width="1.400"/></symbol>
<symbol id="ge" viewBox="0 0 20 20"><circle cx="10" cy="10" r="9.700" fill="#1c1cf0"/><path d="M1 13h18q-3 7-9 7t-9-7z" fill="#20d820"/><path d="M2 11q3-6 8-6t8 6l-1 4-2-2-2 3-3-3-3 3-2-3-2 2z" fill="#fff"/></symbol>
<symbol id="shi" viewBox="0 0 20 20"><path d="M5 4h4M12 4h4M3 9h14M10 9v9M8 18l2-1M4 12l-1 5M16 12l1 5M6 13v2M14 13v2" fill="none" stroke="#e83a3a" stroke-width="1.400"/></symbol>
<symbol id="blk" viewBox="0 0 20 20"><path d="M2 3h16v14H2z" fill="#fff" stroke="#111" stroke-width="3"/><path d="M5 7h10M5 10h10M5 13h10" stroke="#111" stroke-width="1.600"/></symbol>
<symbol id="stop" viewBox="0 0 20 20"><circle cx="10" cy="10" r="9.700" fill="url(#red)"/><path d="M6 6l8 8M14 6l-8 8" stroke="#fff" stroke-width="3.200"/></symbol>
<symbol id="penta" viewBox="0 0 20 20"><path d="M2 8l8-6 8 7v9H2z" fill="#fff" stroke="#2f7fd6" stroke-width="1.700"/></symbol>
<symbol id="gsave" viewBox="0 0 20 20"><path d="M2 2h16v17H2z" fill="currentColor"/><path d="M5 3h10v7H5z" fill="#f2f2f2"/><path d="M7 13h7v5H7z" fill="#ddd"/></symbol>
<symbol id="gbrush" viewBox="0 0 20 20"><path d="M2 5h13v12H2z" fill="#e3e3e3" stroke="#ccc"/><path d="M18 2l-6 8M4 9l6 8 4-7z" fill="currentColor" stroke="currentColor" stroke-width="2"/></symbol>
<symbol id="gpage" viewBox="0 0 20 20"><path d="M3 2h14v16H3z" fill="#f0f0f0" stroke="currentColor" stroke-width="1.600"/></symbol>
<symbol id="ghat" viewBox="0 0 20 20"><path d="M2 10q8-14 16 0M6 10h8l4 8H2z" fill="#e8e8e8" stroke="currentColor" stroke-width="1.600"/></symbol>
<symbol id="gpen" viewBox="0 0 20 20"><path d="M2 7l5 3-4 5 5 4 6-10" fill="none" stroke="currentColor" stroke-width="1.800"/><path d="M11 10l3-8 5-1-1 5-6 7z" fill="currentColor"/></symbol>
<symbol id="gbook" viewBox="0 0 20 20"><path d="M1 5h18v10H1zM10 5v10" fill="#e8e8e8" stroke="#c4c4c4" stroke-width="1.500"/></symbol>
<symbol id="dots" viewBox="0 0 20 20"><path d="M1 4h6M9 5q5 0 9-3M3 11h4M9 13q5 1 8-2M1 18h5M9 17q4 0 9-2" fill="none" stroke="#111" stroke-width="1.600" stroke-dasharray="3 2"/></symbol>
<symbol id="bytree" viewBox="0 0 20 20"><path d="M4 5v11h6M4 9h6" fill="none" stroke="#888"/><circle cx="4" cy="4" r="3.200" fill="url(#sand)" stroke="#b98130"/><path d="M11 6l3.500 3-3.500 3-3.500-3zM11 13l3.500 3-3.500 3-3.500-3z" fill="url(#sand)" stroke="#b98130"/><path d="M16 9h4M16 16h4" stroke="#2872a8" stroke-width="2"/></symbol>
<symbol id="bysrc" viewBox="0 0 20 20"><path d="M2 14h16l-8 6z" fill="#f0c050" stroke="#b98130"/><path d="M4 3v10q6 4 12 0V3z" fill="#8fa2bc" stroke="#4e5f78"/><ellipse cx="10" cy="3" rx="6" ry="2.200" fill="#dfe7f0" stroke="#4e5f78"/><path d="M7 5v9" stroke="#e6edf5" stroke-width="2"/></symbol>
<symbol id="byvis" viewBox="0 0 20 20"><path d="M10 6l9.500 7-9.500 7-9.500-7z" fill="#ddd" stroke="#888"/><path d="M10 0l9.500 7.500-9.500 7.500-9.500-7.500z" fill="url(#sand)" stroke="#b98130"/></symbol>
<symbol id="bysel" viewBox="0 0 20 20"><path d="M0 12l10-4 10 4-10 8z" fill="url(#sand)" stroke="#b98130"/><path d="M4 1h12v12H4z" fill="#fff" stroke="#444" stroke-width="1.500"/><path d="M5 2h6l-1 5v5H5z" fill="#18c8d8"/><path d="M11 2l-1 10M11 6l5-2" stroke="#444"/></symbol>
<symbol id="opts" viewBox="0 0 20 20"><path d="M2 1h16v18H2z" fill="#fff" stroke="#5a6a88" stroke-width="1.600"/><path d="M9 4.500h7M9 7.500h7M9 12.500h7M9 15.500h7" stroke="#98a4b8"/><circle cx="5.500" cy="6" r="1.400" fill="none" stroke="#222"/><circle cx="5.500" cy="14" r="1.600" fill="#222"/></symbol>
<symbol id="layers" viewBox="0 0 20 20"><path d="M5 10h15l-5 8H0z" fill="#f6dc9c" stroke="#a8742c"/><path d="M5 6h15l-5 8H0z" fill="#f6dc9c" stroke="#a8742c"/><path d="M5 2h15l-5 8H0z" fill="url(#sand)" stroke="#a8742c"/></symbol>
<symbol id="result" viewBox="0 0 20 20"><use href="#win"/><path d="M3 13l6-6 4 2-6 6z" fill="#555" stroke="#222"/><path d="M9 11l7 8" stroke="#d49a64" stroke-width="3"/></symbol>
<symbol id="pin" viewBox="0 0 20 20"><path d="M5 3h10M6.500 3v9M3 12h14M10 12v7" fill="none" stroke="#111" stroke-width="2.200"/><path d="M13.500 3v9" stroke="#111" stroke-width="3"/></symbol>
<symbol id="x" viewBox="0 0 20 20"><path d="M2 3l16 15M18 3L2 18" stroke="#111" stroke-width="3.200"/></symbol>
<symbol id="home" viewBox="0 0 20 20"><path d="M3 1h3v5H3z" fill="#2a5cb8"/><path d="M3 10h14v9H3z" fill="#a9d0fa" stroke="#1f4ea8"/><path d="M0 11L10 1l10 10-2 1-8-8-8 8z" fill="#69a6f0" stroke="#1f4ea8"/><path d="M6 13h3v6H6zM11.500 13h4v3h-4z" fill="#2458b8"/></symbol>
<symbol id="refresh" viewBox="0 0 20 20"><path d="M3 8q3-7 10-4l2 2M17 12q-3 7-10 4l-2-2" fill="none" stroke="#1f5fc0" stroke-width="3"/><path d="M18 2v8h-8zM2 18v-8h8z" fill="#2f76d8"/></symbol>
<symbol id="mag" viewBox="0 0 20 20"><circle cx="10" cy="10" r="9.500" fill="#c9e8fb" stroke="#7ab6da"/><circle cx="9" cy="8.500" r="3.700" fill="#eef9ff" stroke="#1c6a9c" stroke-width="1.600"/><path d="M11.500 11.500l3.500 3.500" stroke="#1c6a9c" stroke-width="2"/></symbol>
<symbol id="dataview" viewBox="0 0 20 20"><path d="M3 2h14v16H3z" fill="#b7d67c" stroke="#222" stroke-width="2.400"/><path d="M6 14l6-9 2 5z" fill="#f4f8d8"/></symbol>
<symbol id="layview" viewBox="0 0 20 20"><path d="M3 1h10l4 4v14H3z" fill="#fff" stroke="#222" stroke-width="2"/><path d="M6 7h7v3H6zM8 12h6v4H8z" fill="#666"/></symbol>
<symbol id="pause" viewBox="0 0 20 20"><path d="M4 2h4v16H4zM12 2h4v16h-4z" fill="#1f4f9c"/></symbol>
<symbol id="cl" viewBox="0 0 20 20"><path d="M14 2l-8 8 8 8" fill="none" stroke="#555" stroke-width="4"/></symbol>
<symbol id="cr" viewBox="0 0 20 20"><path d="M6 2l8 8-8 8" fill="none" stroke="#555" stroke-width="4"/></symbol>
<symbol id="cu" viewBox="0 0 20 20"><path d="M2 14l8-8 8 8" fill="none" stroke="#555" stroke-width="4"/></symbol>
<symbol id="cd" viewBox="0 0 20 20"><path d="M2 6l8 8 8-8" fill="none" stroke="#555" stroke-width="4"/></symbol>
<symbol id="chev" viewBox="0 0 12 12"><path d="M1 3.500l5 5 5-5" fill="none" stroke="currentColor" stroke-width="1.400"/></symbol>
<symbol id="rotf" viewBox="0 0 20 20"><path d="M5 17A8.500 8.500 0 1116 16" fill="none" stroke="currentColor" stroke-width="1.600"/><path d="M13 13l6 1-3 5z" fill="currentColor"/><path d="M8.500 8.500h3v3h-3z" fill="#eee" stroke="currentColor" stroke-width="1.500"/></symbol>
<symbol id="zoomsel" viewBox="0 0 20 20"><path d="M1 1h18v17H1zM12 3h5v4h-5zM12 10h5v4h-5z" fill="#e6e6e6" stroke="currentColor" stroke-width="1.400"/><circle cx="7" cy="9" r="5" fill="#eee" stroke="currentColor" stroke-width="1.500"/><path d="M7 6v6M4 9h6M11 13l5 6" stroke="currentColor" stroke-width="2"/></symbol>
<symbol id="rect" viewBox="0 0 20 20"><path d="M2 2h16v16H2z" fill="#f8f8f8" stroke="#222" stroke-width="1.600"/></symbol>
<symbol id="bez" viewBox="0 0 20 20"><path d="M8 3h10l-5 6 4 8H3q1-7 5-14" fill="#eee" stroke="currentColor" stroke-width="1.400"/><path d="M6 1h4v4H6zM16 1h4v4h-4zM11 7h4v4h-4zM16 15h4v4h-4zM0 15h4v4H0z" fill="currentColor"/></symbol>
<symbol id="fonto" viewBox="0 0 20 20"><path d="M1 1h14l4 4v14H1z" fill="#c4dcf8" stroke="#4a7ab8" stroke-width="1.300"/><ellipse cx="9.500" cy="10" rx="3.200" ry="6" transform="rotate(18 9.500 10)" fill="none" stroke="#1c5a28" stroke-width="2.600"/></symbol>
<symbol id="bucket" viewBox="0 0 20 20"><path d="M3 8l7-6 6 8-8 5z" fill="#ddd" stroke="#444" stroke-width="1.400"/><path d="M9 1v7" stroke="#444" stroke-width="1.400"/><path d="M13 5q6 0 6 9-3-1-3-5z" fill="#333"/></symbol>
<symbol id="nib" viewBox="0 0 20 20"><path d="M2 17l4-10 8-3 3 3-4 7z" fill="#ddd" stroke="#222" stroke-width="1.500"/><path d="M13 2l3-1 3 3-2 3z" fill="#333"/><path d="M3 16l7-7" stroke="#222"/><path d="M0 18h8" stroke="#222" stroke-width="1.500"/></symbol>
<symbol id="bluedot" viewBox="0 0 20 20"><circle cx="10" cy="9" r="4" fill="#1414c8"/></symbol>
<symbol id="min" viewBox="0 0 14 14"><path d="M1 7.500h12" stroke="#000"/></symbol>
<symbol id="restore" viewBox="0 0 14 14"><path d="M1.500 3.500h9v9h-9zM3.500 3.500v-2h9v9h-2" fill="none" stroke="#000"/></symbol>
<symbol id="close" viewBox="0 0 14 14"><path d="M1 1l12 12M13 1L1 13" stroke="#000"/></symbol>
</svg>

<header class="titlebar">
<svg class="app-icon"><use href="#app"/></svg><h1>无标题 - ArcMap</h1>
<div class="win-btns"><button aria-label="最小化"><svg><use href="#min"/></svg></button><button aria-label="还原"><svg><use href="#restore"/></svg></button><button aria-label="关闭"><svg><use href="#close"/></svg></button></div>
</header>

<nav class="menu"><button>文件(F)</button><button>编辑(E)</button><button>视图(V)</button><button>书签(B)</button><button>插入(I)</button><button>选择(S)</button><button>地理处理(G)</button><button>自定义(C)</button><button>窗口(W)</button><button>帮助(H)</button></nav>

<section class="toolbars">
<div class="row">
<div class="bar bar-standard"><i class="grip"></i>
<button class="b" aria-label="新建"><svg><use href="#new"/></svg></button><button class="b" aria-label="打开"><svg><use href="#open"/></svg></button><button class="b" aria-label="保存"><svg><use href="#save"/></svg></button><button class="b" aria-label="打印"><svg><use href="#print"/></svg></button><i class="sep"></i>
<button class="b" disabled aria-label="剪切"><svg><use href="#cut"/></svg></button><button class="b" disabled aria-label="复制"><svg><use href="#copy"/></svg></button><button class="b" aria-label="粘贴"><svg><use href="#paste"/></svg></button><button class="b" disabled aria-label="删除"><svg><use href="#del"/></svg></button><i class="sep"></i>
<button class="b" disabled aria-label="撤消"><svg><use href="#undo"/></svg></button><button class="b" disabled aria-label="恢复"><svg><use href="#redo"/></svg></button><i class="sep"></i>
<button class="b" aria-label="添加数据"><svg><use href="#adddata"/></svg></button><button class="caret" aria-label="添加数据选项"></button><i class="sep"></i>
<div class="combo off combo-scale"><select disabled aria-label="比例"><option></option></select><svg><use href="#chev"/></svg></div><i class="space"></i>
<button class="b on" aria-label="编辑器工具条"><svg><use href="#edit"/></svg></button><i class="space"></i><i class="space"></i>
<button class="b" aria-label="内容列表"><svg><use href="#toc"/></svg></button><button class="b" aria-label="目录"><svg><use href="#catalog"/></svg></button><button class="b" aria-label="搜索"><svg><use href="#searchwin"/></svg></button><button class="b" aria-label="ArcToolbox"><svg><use href="#toolbox"/></svg></button><button class="b" aria-label="Python"><svg><use href="#python"/></svg></button><i class="sep"></i><button class="b" aria-label="模型构建器"><svg><use href="#model"/></svg></button>
<button class="more" aria-label="工具条选项"></button></div>
<div class="bar bar-pages"><i class="grip"></i>
<button class="b" aria-label="数据驱动页面设置"><svg><use href="#dd1"/></svg></button><button class="b" disabled aria-label="刷新页面"><svg><use href="#pagerot"/></svg></button><button class="b" disabled aria-label="页面属性"><svg><use href="#table"/></svg></button><i class="sep"></i>
<button class="b" disabled aria-label="第一页"><svg><use href="#first"/></svg></button><button class="b" disabled aria-label="上一页"><svg><use href="#prev"/></svg></button>
<div class="combo off combo-name"><select disabled aria-label="页面"><option>显示名称</option></select><svg><use href="#chev"/></svg></div>
<button class="b" disabled aria-label="下一页"><svg><use href="#next"/></svg></button><button class="b" disabled aria-label="最后一页"><svg><use href="#last"/></svg></button><i class="sep"></i>
<button class="t">页面文本(P)<i class="caret"></i></button><button class="more" aria-label="工具条选项"></button></div>
<div class="bar bar-effects"><i class="grip"></i>
<div class="combo classic"><select disabled aria-label="图层"><option></option></select><i class="classic-btn"></i></div>
<button class="b" disabled aria-label="对比度"><svg><use href="#contrast"/></svg></button><button class="b" disabled aria-label="亮度"><svg><use href="#sun"/></svg></button><button class="b" disabled aria-label="透明度"><svg><use href="#trans"/></svg></button><button class="b" disabled aria-label="图层效果"><svg><use href="#diamond"/></svg></button><i class="sep"></i><button class="b" disabled aria-label="卷帘"><svg><use href="#swipe"/></svg></button><i class="sep"></i><button class="b" disabled aria-label="闪烁"><svg><use href="#flicker"/></svg></button>
<div class="spin"><input type="text" value="500" aria-label="闪烁速度"><div class="spin-btns"><button class="up" aria-label="增加"></button><button class="down" aria-label="减少"></button></div></div>
<button class="more" aria-label="工具条选项"></button></div>
</div>

<div class="row">
<div class="bar bar-tools"><i class="grip"></i>
<button class="b" aria-label="放大"><svg><use href="#zoomin"/></svg></button><button class="b" aria-label="缩小"><svg><use href="#zoomout"/></svg></button><button class="b on" aria-label="平移"><svg><use href="#pan"/></svg></button><button class="b" aria-label="全图"><svg><use href="#globe"/></svg></button><i class="sep"></i>
<button class="b" aria-label="固定比例放大"><svg><use href="#fixin"/></svg></button><button class="b" aria-label="固定比例缩小"><svg><use href="#fixout"/></svg></button><i class="sep"></i>
<button class="b" disabled aria-label="返回上一视图"><svg><use href="#left"/></svg></button><button class="b" disabled aria-label="转到下一视图"><svg><use href="#right"/></svg></button><i class="sep"></i>
<button class="b" disabled aria-label="选择要素"><svg><use href="#selfeat"/></svg></button><button class="caret dim" disabled aria-label="选择方式"></button><button class="b" disabled aria-label="清除选择"><svg><use href="#clearsel"/></svg></button><i class="sep"></i>
<button class="b" aria-label="选择元素"><svg><use href="#arrow"/></svg></button><i class="sep"></i>
<button class="b" aria-label="识别"><svg><use href="#info"/></svg></button><button class="b" disabled aria-label="超链接"><svg><use href="#bolt"/></svg></button><button class="b" disabled aria-label="弹出窗口"><svg><use href="#popup"/></svg></button><i class="sep"></i>
<button class="b" disabled aria-label="测量"><svg><use href="#measure"/></svg></button><i class="sep"></i>
<button class="b" aria-label="查找"><svg><use href="#find"/></svg></button><button class="b" aria-label="查找路径"><svg><use href="#route"/></svg></button><button class="b" aria-label="转到 XY"><svg><use href="#xy"/></svg></button><i class="sep"></i>
<button class="b" disabled aria-label="时间滑块"><svg><use href="#time"/></svg></button><i class="sep"></i><button class="b" aria-label="查看器窗口"><svg><use href="#viewer"/></svg></button>
<button class="more" aria-label="工具条选项"></button></div>
<div class="bar bar-cogo"><i class="grip"></i>
<button class="b" disabled aria-label="选择"><svg><use href="#ptr"/></svg></button><button class="b" disabled aria-label="添加"><svg><use href="#ptrplus"/></svg></button><button class="b" disabled aria-label="移除"><svg><use href="#ptrminus"/></svg></button><i class="sep"></i><button class="b" disabled aria-label="角度"><svg><use href="#angle"/></svg></button><i class="sep"></i><button class="b" disabled aria-label="缩放"><svg><use href="#nodes"/></svg></button><button class="b" disabled aria-label="修整"><svg><use href="#shape"/></svg></button><i class="sep"></i><button class="b" disabled aria-label="草图属性"><svg><use href="#sketchbox"/></svg></button>
<button class="more" aria-label="工具条选项"></button></div>
<div class="bar bar-advanced"><i class="grip"></i>
<button class="b" disabled aria-label="复制要素"><svg><use href="#ext"/></svg></button><button class="b" disabled aria-label="内圆角"><svg><use href="#fillet"/></svg></button><button class="b" disabled aria-label="延伸"><svg><use href="#snapr"/></svg></button><button class="b" disabled aria-label="修剪"><svg><use href="#crossl"/></svg></button><button class="b" disabled aria-label="线相交"><svg><use href="#xline"/></svg></button><i class="sep"></i>
<button class="b" disabled aria-label="拆分多部件"><svg><use href="#spray"/></svg></button><button class="b" disabled aria-label="构造大地测量"><svg><use href="#ball"/></svg></button><i class="sep"></i>
<button class="b" disabled aria-label="对齐"><svg><use href="#align1"/></svg></button><button class="b" disabled aria-label="替换几何"><svg><use href="#pagerot"/></svg></button><button class="b" disabled aria-label="构造"><svg><use href="#wrench"/></svg></button><button class="b" disabled aria-label="概化"><svg><use href="#boxnode"/></svg></button><button class="b" disabled aria-label="平滑"><svg><use href="#boxnode2"/></svg></button><i class="sep"></i>
<button class="b" disabled aria-label="合并"><svg><use href="#union"/></svg></button><button class="b" disabled aria-label="外轮廓"><svg><use href="#octa"/></svg></button>
<button class="more" aria-label="工具条选项"></button></div>
<div class="bar bar-topology"><i class="grip"></i>
<button class="b" disabled aria-label="选择拓扑"><svg><use href="#house"/></svg></button><i class="sep"></i><button class="b" disabled aria-label="拓扑编辑"><svg><use href="#topoptr"/></svg></button><button class="caret dim" disabled aria-label="拓扑编辑选项"></button><i class="sep"></i>
<button class="b" disabled aria-label="修改边"><svg><use href="#topo"/></svg></button><button class="b" disabled aria-label="整形边"><svg><use href="#topopen"/></svg></button><button class="b" disabled aria-label="对齐边"><svg><use href="#dline"/></svg></button><button class="b" disabled aria-label="概化边"><svg><use href="#stairs"/></svg></button><i class="sep"></i><button class="b" disabled aria-label="共享要素"><svg><use href="#topo"/></svg></button><i class="sep"></i>
<button class="b" disabled aria-label="验证指定区域"><svg><use href="#topook"/></svg></button><button class="b" disabled aria-label="验证当前范围"><svg><use href="#topook2"/></svg></button><i class="sep"></i><button class="b" disabled aria-label="修复错误"><svg><use href="#errptr"/></svg></button><button class="b" disabled aria-label="错误检查器"><svg><use href="#errwin"/></svg></button>
<button class="more" aria-label="工具条选项"></button></div>
<div class="bar bar-label"><i class="grip"></i>
<button class="t">标注<i class="caret"></i></button><button class="b" aria-label="标注管理器"><svg><use href="#tag1"/></svg></button><button class="b" aria-label="优先级"><svg><use href="#tag2"/></svg></button><button class="b" aria-label="权重"><svg><use href="#tag3"/></svg></button><button class="b" aria-label="锁定标注"><svg><use href="#tag4"/></svg></button><button class="b" aria-label="暂停标注"><svg><use href="#tag5"/></svg></button><button class="b" aria-label="未放置标注"><svg><use href="#tag6"/></svg></button><i class="sep"></i>
<div class="combo flat"><select disabled aria-label="标注质量"><option>快速</option></select><svg><use href="#chev"/></svg></div>
<button class="more" aria-label="工具条选项"></button></div>
</div>

<div class="row">
<div class="bar bar-editor"><i class="grip"></i>
<button class="t">编辑器(R)<i class="caret"></i></button><i class="sep"></i>
<button class="b" disabled aria-label="编辑工具"><svg><use href="#eptr"/></svg></button><button class="b" disabled aria-label="编辑注记"><svg><use href="#eptra"/></svg></button><i class="sep"></i>
<button class="b" disabled aria-label="直线段"><svg><use href="#seg"/></svg></button><button class="b" disabled aria-label="弧段"><svg><use href="#arc"/></svg></button><button class="b" disabled aria-label="追踪"><svg><use href="#trace"/></svg></button><button class="caret dim" disabled aria-label="追踪选项"></button><button class="b" disabled aria-label="点"><svg><use href="#burst"/></svg></button><i class="sep"></i>
<button class="b" disabled aria-label="整形要素"><svg><use href="#reshape"/></svg></button><button class="b" disabled aria-label="裁剪面"><svg><use href="#cutpoly"/></svg></button><button class="b" disabled aria-label="分割"><svg><use href="#split"/></svg></button><button class="b" disabled aria-label="打断"><svg><use href="#crossx"/></svg></button><button class="b" disabled aria-label="旋转"><svg><use href="#rot"/></svg></button><i class="sep"></i>
<button class="b" disabled aria-label="属性"><svg><use href="#attr"/></svg></button><button class="b" disabled aria-label="草图属性"><svg><use href="#sketchbox"/></svg></button><i class="sep"></i><button class="b" disabled aria-label="创建要素"><svg><use href="#create"/></svg></button>
<button class="more" aria-label="工具条选项"></button></div>
<div class="bar bar-webmap"><i class="grip"></i>
<button class="t">谷歌地图<i class="caret"></i></button><i class="sep"></i><button class="t">高德地图<i class="caret"></i></button><button class="t">天地图<i class="caret"></i></button><button class="t">搜搜地图<i class="caret"></i></button><i class="sep"></i><button class="t">必应地图<i class="caret"></i></button><button class="t">其它地图<i class="caret"></i></button><i class="sep"></i>
<div class="combo tiles"><select aria-label="切片图层"><option>切片图层列表</option></select><i class="caret"></i></div>
<button class="b" aria-label="坐标纠偏"><svg><use href="#diag"/></svg></button><i class="sep"></i><button class="t">选项...<i class="caret"></i></button><i class="sep"></i><button class="t t-plain">用户/注册</button><button class="b" aria-label="关于"><svg><use href="#info"/></svg></button>
<button class="more" aria-label="工具条选项"></button></div>
<div class="bar bar-graphics"><i class="grip"></i>
<button class="b" disabled aria-label="组合"><svg><use href="#group"/></svg></button><button class="b" disabled aria-label="取消组合"><svg><use href="#ungroup"/></svg></button><i class="sep"></i>
<button class="b" disabled aria-label="置于顶层"><svg><use href="#ord1"/></svg></button><button class="b" disabled aria-label="置于底层"><svg><use href="#ord2"/></svg></button><button class="b" disabled aria-label="上移一层"><svg><use href="#ord3"/></svg></button><button class="b" disabled aria-label="下移一层"><svg><use href="#ord4"/></svg></button><i class="sep"></i>
<button class="b" disabled aria-label="对齐边距"><svg><use href="#al0"/></svg></button><button class="b" disabled aria-label="左对齐"><svg><use href="#all"/></svg></button><button class="b" disabled aria-label="居中"><svg><use href="#alc"/></svg></button><button class="b" disabled aria-label="右对齐"><svg><use href="#alr"/></svg></button><button class="b" disabled aria-label="顶端对齐"><svg><use href="#alt"/></svg></button><button class="b" disabled aria-label="垂直居中"><svg><use href="#alm"/></svg></button><button class="b" disabled aria-label="底端对齐"><svg><use href="#alb"/></svg></button><i class="sep"></i>
<button class="b" disabled aria-label="横向分布"><svg><use href="#dish"/></svg></button><button class="b" disabled aria-label="纵向分布"><svg><use href="#disv"/></svg></button><button class="b" disabled aria-label="相同大小"><svg><use href="#same"/></svg></button><button class="b" disabled aria-label="相同宽度"><svg><use href="#samew"/></svg></button><button class="b" disabled aria-label="相同高度"><svg><use href="#sameh"/></svg></button><i class="sep"></i>
<button class="b" disabled aria-label="向右旋转"><svg><use href="#rotr"/></svg></button><button class="b" disabled aria-label="向左旋转"><svg><use href="#rotl"/></svg></button><button class="b" disabled aria-label="水平翻转"><svg><use href="#fliph"/></svg></button><button class="b" disabled aria-label="垂直翻转"><svg><use href="#flipv"/></svg></button>
<button class="more" aria-label="工具条选项"></button></div>
</div>

<div class="row">
<div class="bar bar-snap"><i class="grip"></i>
<button class="t">捕捉(S)<i class="caret"></i></button><button class="b on" aria-label="点捕捉"><svg><use href="#pt"/></svg></button><button class="b on" aria-label="端点捕捉"><svg><use href="#grid"/></svg></button><button class="b on" aria-label="折点捕捉"><svg><use href="#sq"/></svg></button><button class="b on" aria-label="边捕捉"><svg><use href="#edge"/></svg></button>
<button class="more" aria-label="工具条选项"></button></div>
<div class="bar bar-layout"><i class="grip"></i>
<button class="b" disabled aria-label="布局放大"><svg><use href="#pgin"/></svg></button><button class="b" disabled aria-label="布局缩小"><svg><use href="#pgout"/></svg></button><button class="b" disabled aria-label="布局平移"><svg><use href="#pgpan"/></svg></button><button class="b" disabled aria-label="缩放整个页面"><svg><use href="#pgall"/></svg></button><button class="b" disabled aria-label="缩放至 100%"><svg><use href="#pg11"/></svg></button><i class="sep"></i>
<button class="b" disabled aria-label="固定放大"><svg><use href="#pgfi"/></svg></button><button class="b" disabled aria-label="固定缩小"><svg><use href="#pgfo"/></svg></button><i class="sep"></i><button class="b" disabled aria-label="返回"><svg><use href="#pgl"/></svg></button><button class="b" disabled aria-label="前进"><svg><use href="#pgr"/></svg></button>
<div class="combo off combo-zoom"><select disabled aria-label="缩放比例"><option>100%</option></select><svg><use href="#chev"/></svg></div><i class="sep"></i>
<button class="b on-dim" disabled aria-label="草稿模式"><svg><use href="#draft"/></svg></button><button class="b" disabled aria-label="焦点数据框"><svg><use href="#focus"/></svg></button><button class="b" aria-label="更改布局"><svg><use href="#layoutch"/></svg></button><button class="b on" aria-label="数据驱动页面工具条"><svg><use href="#ddpage"/></svg></button>
<button class="more" aria-label="工具条选项"></button></div>
<div class="bar bar-data"><i class="grip"></i>
<button class="b" aria-label="标准分幅"><svg><use href="#four"/></svg></button><button class="b" aria-label="分幅显示"><svg><use href="#pc"/></svg></button><i class="sep"></i><button class="b" aria-label="斜分幅"><svg><use href="#foursk"/></svg></button><button class="b" aria-label="添加分幅"><svg><use href="#pcadd"/></svg></button><i class="sep"></i>
<button class="t">图框工具<i class="caret"></i></button><button class="b" aria-label="图框"><svg><use href="#small"/></svg></button><button class="b" aria-label="网络"><svg><use href="#pcnet"/></svg></button><button class="b" aria-label="拾取"><svg><use href="#ylw"/></svg></button><i class="sep"></i>
<button class="b" aria-label="面"><svg><use href="#poly"/></svg></button><button class="b b-no">NO</button><button class="b" aria-label="查询"><svg><use href="#pcq"/></svg></button><i class="sep"></i><button class="b" aria-label="注记"><svg><use href="#ab"/></svg></button><button class="b" aria-label="地球"><svg><use href="#ge"/></svg></button><i class="sep"></i><button class="b" aria-label="示意"><svg><use href="#shi"/></svg></button><i class="sep"></i><button class="b" aria-label="列表"><svg><use href="#blk"/></svg></button><i class="sep"></i><button class="b" aria-label="停止"><svg><use href="#stop"/></svg></button><i class="sep"></i>
<button class="t">制图工具<i class="caret"></i></button><i class="sep"></i><button class="t">图形裁剪<i class="caret"></i></button><button class="b" aria-label="多边形"><svg><use href="#penta"/></svg></button><i class="sep"></i>
<button class="b" disabled aria-label="保存图形"><svg><use href="#gsave"/></svg></button><button class="b" disabled aria-label="刷"><svg><use href="#gbrush"/></svg></button><i class="sep"></i><button class="b" disabled aria-label="页"><svg><use href="#gpage"/></svg></button><button class="b" disabled aria-label="形状"><svg><use href="#ghat"/></svg></button><button class="b" disabled aria-label="笔"><svg><use href="#gpen"/></svg></button><button class="b" disabled aria-label="对照"><svg><use href="#gbook"/></svg></button><i class="sep"></i><button class="b" aria-label="线"><svg><use href="#dots"/></svg></button><i class="sep"></i>
<button class="t">数据处理<i class="caret"></i></button><i class="sep"></i><button class="t">数据空间分析<i class="caret"></i></button><i class="sep"></i><button class="t">其他<i class="caret"></i></button>
<button class="more" aria-label="工具条选项"></button></div>
</div>
</section>

<main class="work">
<aside class="toc">
<div class="panel-head"><h2>内容列表</h2><button aria-label="自动隐藏"><svg><use href="#pin"/></svg></button><button aria-label="关闭"><svg><use href="#x"/></svg></button></div>
<div class="toc-tools"><button class="b on" aria-label="按绘制顺序列出"><svg><use href="#bytree"/></svg></button><button class="b" aria-label="按源列出"><svg><use href="#bysrc"/></svg></button><button class="b" aria-label="按可见性列出"><svg><use href="#byvis"/></svg></button><button class="b" aria-label="按选择列出"><svg><use href="#bysel"/></svg></button><i class="sep"></i><button class="b" aria-label="选项"><svg><use href="#opts"/></svg></button></div>
<div class="tree"><div class="node"><svg><use href="#layers"/></svg><span>图层</span></div></div>
<div class="tabs"><button><svg><use href="#result"/></svg>结果</button><button class="active"><svg><use href="#toc"/></svg>内容列表</button></div>
</aside>

<section class="map">
<div class="canvas"></div>
<div class="vscroll"><button aria-label="向上"><svg><use href="#cu"/></svg></button><i class="vthumb"></i><button aria-label="向下"><svg><use href="#cd"/></svg></button></div>
<div class="hstrip"><button class="v active" aria-label="数据视图"><svg><use href="#dataview"/></svg></button><button class="v" aria-label="布局视图"><svg><use href="#layview"/></svg></button><i class="sep"></i><button class="v" aria-label="刷新"><svg><use href="#refresh"/></svg></button><button class="v" aria-label="暂停绘制"><svg><use href="#pause"/></svg></button><button class="v" aria-label="向左"><svg><use href="#cl"/></svg></button><i class="hthumb"></i><button class="v" aria-label="向右"><svg><use href="#cr"/></svg></button></div>
</section>

<aside class="search">
<div class="panel-head panel-head-active"><h2>搜索</h2><button aria-label="自动隐藏"><svg><use href="#pin"/></svg></button><button aria-label="关闭"><svg><use href="#x"/></svg></button></div>
<div class="search-tools"><button class="b blue" aria-label="后退"><svg><use href="#left"/></svg></button><button class="b" disabled aria-label="前进"><svg><use href="#right"/></svg></button><i class="sep"></i><button class="b" aria-label="主页"><svg><use href="#home"/></svg></button><button class="b" aria-label="刷新"><svg><use href="#refresh"/></svg></button><i class="sep"></i><button class="b" aria-label="搜索选项"><svg><use href="#opts"/></svg></button><button class="caret" aria-label="更多搜索选项"></button>
<div class="combo local"><select aria-label="搜索位置"><option>本地搜索</option></select><svg><use href="#chev"/></svg></div></div>
<div class="search-form">
<nav class="kinds"><strong>全部</strong><a href="#">地图</a><a href="#">数据</a><a href="#">工具</a><a href="#">图像</a></nav>
<div class="query"><input type="text" aria-label="搜索内容"><button aria-label="搜索"><svg><use href="#mag"/></svg></button></div>
<div class="extent"><a href="#">任何范围</a><i class="caret"></i></div>
</div>
<div class="results"></div>
<div class="tabs"><button><svg><use href="#toolbox"/></svg>ArcToolbox</button><button><svg><use href="#catalog"/></svg>目录</button><button class="active focused"><svg><use href="#searchwin"/></svg>搜索</button></div>
</aside>
</main>

<div class="row draw-row"><div class="bar bar-draw"><i class="grip"></i>
<button class="t">绘制(D)<i class="caret"></i></button><button class="b" aria-label="选择元素"><svg><use href="#arrow"/></svg></button><button class="b" disabled aria-label="旋转"><svg><use href="#rotf"/></svg></button><button class="b" disabled aria-label="缩放至所选元素"><svg><use href="#zoomsel"/></svg></button><i class="sep"></i>
<button class="b" aria-label="矩形"><svg><use href="#rect"/></svg></button><button class="caret" aria-label="更多形状"></button><button class="b serif big">A</button><button class="caret" aria-label="更多文本"></button><button class="b" disabled aria-label="编辑折点"><svg><use href="#bez"/></svg></button><i class="sep"></i>
<div class="combo font"><svg class="font-icon"><use href="#fonto"/></svg><select aria-label="字体"><option>宋体</option></select><svg class="chev"><use href="#chev"/></svg></div><div class="combo size"><select aria-label="字号"><option>10</option></select><svg><use href="#chev"/></svg></div>
<button class="b serif">B</button><button class="b serif italic">I</button><button class="b serif under">U</button><i class="sep"></i>
<button class="c serif"><span>A</span><i class="swatch black"></i></button><button class="caret" aria-label="字体颜色"></button><button class="c" aria-label="填充"><svg><use href="#bucket"/></svg><i class="swatch cream"></i></button><button class="caret" aria-label="填充颜色"></button><button class="c" aria-label="线"><svg><use href="#nib"/></svg><i class="swatch black"></i></button><button class="caret" aria-label="线颜色"></button><button class="c" aria-label="标记"><svg><use href="#bluedot"/></svg><i class="swatch green"></i></button><button class="caret" aria-label="标记颜色"></button>
<button class="more" aria-label="工具条选项"></button></div></div>

<footer class="status"><span>1352.475&nbsp; -145.545 未知单位</span></footer>
<div class="taskbar"><i class="task-window"></i><i class="task-item"></i></div>
<div class="watermark">CSDN @da-peng-song</div>
</body>
</html>
```

FILE: styles.css
```css
* { box-sizing: border-box; }

html, body { height: 100%; margin: 0; }

body {
  display: flex;
  flex-direction: column;
  position: relative;
  overflow: hidden;
  color: #000;
  font: 15px/20px "Open Sans", "Noto Sans CJK SC", sans-serif;
  background: linear-gradient(90deg, #f0f0f0, #fafafa 80%);
}

button, input, select { font: inherit; color: inherit; margin: 0; }
button { padding: 0; border: 0; background: none; white-space: nowrap; }
svg { display: block; flex: none; }
h1, h2 { margin: 0; font: inherit; }
i { flex: none; font-style: normal; }
/* kept rendered at zero size so its gradients stay usable */
.defs { position: absolute; width: 0; height: 0; }

/* title bar */
.titlebar { display: flex; flex: none; align-items: center; height: 29px; padding: 0 3px 1px 2px; background: #fff; }
.app-icon { width: 20px; height: 20px; }
.titlebar h1 { margin-left: 5px; }
.win-btns { display: flex; margin-left: auto; }
.win-btns button { display: grid; place-items: center; width: 58px; height: 28px; }
.win-btns svg { width: 14px; height: 14px; }

/* menu */
.menu { display: flex; flex: none; align-items: center; height: 33px; padding: 0 0 1px 4px; }
.menu button { padding: 0 11px; }

/* toolbars */
.toolbars { flex: none; }
.row { display: flex; flex: none; height: 35px; }
.bar {
  display: flex;
  flex: none;
  align-items: center;
  height: 34px;
  border-radius: 4px;
  background: linear-gradient(#fdfdfd, #f0f0f0);
}
.bar-standard { width: 773px; margin-left: 4px; }
.bar-pages { width: 487px; margin-left: 56px; }
.bar-effects { width: 504px; margin-left: 77px; }
.bar-tools { width: 657px; margin-left: 4px; }
.bar-cogo { width: 240px; margin-left: 3px; }
.bar-advanced { width: 432px; margin-left: 4px; }
.bar-topology { width: 379px; margin-left: 4px; }
.bar-label { width: 330px; margin-left: 60px; }
.bar-editor { width: 546px; margin-left: 4px; }
.bar-webmap { width: 939px; margin-left: 5px; }
.bar-graphics { width: 658px; margin-left: 6px; }
.bar-snap { width: 203px; margin-left: 157px; }
.bar-layout { width: 480px; margin-left: 39px; }
.bar-data { width: 1252px; margin-left: 241px; }
.bar-draw { width: 856px; margin-left: 266px; }

.grip { width: 9px; height: 21px; background: radial-gradient(circle, #aaa 1px, transparent 2px) 2px 0 / 4px 5px repeat-y; }
.sep { width: 9px; height: 21px; background: linear-gradient(#bbb, #bbb) center / 1px 100% no-repeat; }
.space { width: 7px; }
.space + .space { width: 0; }

.b { display: grid; place-items: center; flex: none; width: 27px; height: 27px; color: #111; }
.b svg { width: 20px; height: 20px; }
.b:disabled { color: #b2b2b2; }
.b.on { border: 1px solid #1080d8; outline: 1px solid #7ab8e8; outline-offset: -2px; background: #d6eafa; }
.b.on-dim { border: 1px solid #a9c4dc; background: #e2ecf5; }
.b.blue { color: #2a62c8; }
.b-no { font: bold 13px "Liberation Sans", sans-serif; }

.caret { display: grid; place-items: center; flex: none; width: 13px; height: 20px; }
.caret::before { content: ""; border: 4px solid transparent; border-top: 5px solid #111; border-bottom: 0; }
.caret.dim::before { border-top-color: #aaa; }
.t { display: flex; align-items: center; flex: none; padding-left: 6px; }
.t-plain { padding-right: 3px; }
.bar-data .caret { width: 12px; }
.bar-draw .t { padding-right: 4px; }

.more {
  display: flex;
  flex: none;
  flex-direction: column;
  align-items: center;
  justify-content: flex-end;
  width: 14px;
  height: 34px;
  margin-left: auto;
  padding-bottom: 5px;
  background: linear-gradient(#f8f8f8, #a2a2a2);
}
.more::before { content: ""; width: 7px; height: 2px; margin-bottom: 2px; background: #111; }
.more::after { content: ""; border: 4px solid transparent; border-top: 5px solid #000; border-bottom: 0; }

/* combo boxes */
.combo { display: grid; flex: none; align-items: center; height: 26px; }
.combo > * { grid-area: 1 / 1; }
.combo select { appearance: none; width: 100%; height: 100%; padding: 0 4px; border: 1px solid #ccc; border-radius: 0; background: #fff; opacity: 1; }
.combo > svg { justify-self: end; width: 12px; height: 12px; margin-right: 5px; color: #555; pointer-events: none; }
.combo.off select { border: 2px solid #dcdcdc; padding: 1px 24px 1px 2px; color: #777; background: linear-gradient(#f0f0f0, #f0f0f0) content-box no-repeat #fff; line-height: 18px; }
.combo.off > svg { color: #bbb; }
.combo-scale { width: 185px; }
.combo-name { width: 156px; }
.combo-zoom { width: 74px; }
.combo-zoom select { font-family: "Liberation Serif", serif; }
.combo.classic { width: 223px; }
.combo.classic select { border: 2px solid; border-color: #808080 #eee #eee #808080; background: #efefef; }
.classic-btn { display: grid; place-items: center; justify-self: end; width: 20px; height: 20px; margin-right: 2px; border: 1px solid; border-color: #fff #888 #888 #fff; background: #f0f0f0; }
.classic-btn::before { content: ""; border: 5px solid transparent; border-top: 5px solid #8a8a8a; border-bottom: 0; }
.combo.flat { width: 83px; height: 31px; }
.combo.flat select { border-color: #bfbfbf; background: #cccccc; color: #808080; }
.combo.flat > svg { color: #999; }
.combo.tiles { width: 218px; height: 28px; }
.combo.tiles select { border: 0; color: #707070; }
.combo.tiles .caret { justify-self: end; margin-right: 1px; }
.combo.font { width: 214px; }
.combo.font select { padding-left: 24px; border: 1px solid #777; }
.combo.font .font-icon { z-index: 1; justify-self: start; width: 18px; height: 20px; margin-left: 4px; }
.combo.size { width: 57px; }
.combo.size select { border: 1px solid #777; font-family: "Liberation Serif", serif; padding-left: 3px; }

.spin { display: flex; flex: none; width: 76px; height: 26px; border: 1px solid #888; background: #fff; }
.spin input { flex: 1; min-width: 0; border: 0; padding: 0 2px; background: none; font: 14px/20px "Liberation Sans", sans-serif; }
.spin-btns { display: flex; flex-direction: column; width: 20px; }
.spin-btns button { display: grid; place-items: center; flex: 1; border: 1px solid #999; background: #ececec; }
.spin-btns button::before { content: ""; border: 4px solid transparent; }
.spin-btns .up::before { border-bottom: 5px solid #111; border-top: 0; }
.spin-btns .down::before { border-top: 5px solid #111; border-bottom: 0; }

/* work area */
.work { display: grid; flex: 1; min-height: 0; grid-template-columns: 351px minmax(0, 1fr) 477px; column-gap: 7px; }
.panel-head { display: flex; align-items: center; flex: none; height: 27px; padding: 0 2px 1px 5px; background: linear-gradient(90deg, #bccbda, #d6e3f1); }
.panel-head h2 { flex: 1; }
.panel-head button { display: grid; place-items: center; width: 20px; height: 20px; }
.panel-head button svg { width: 12px; height: 12px; }
.panel-head-active { background: linear-gradient(90deg, #98b3d3, #b8cfea); }

.toc { display: flex; flex-direction: column; min-height: 0; }
.toc-tools { display: flex; align-items: center; flex: none; height: 32px; padding-left: 5px; background: linear-gradient(#fcfcfc, #efefef); }
.tree { flex: 1; border: 1px solid #828790; background: #fff; }
.node { display: flex; align-items: center; height: 26px; margin: 1px 0 0 29px; }
.node svg { width: 20px; height: 17px; }
.node span { margin-left: 4px; padding: 2px; line-height: 21px; color: #fff; background: #0078d7; }

.tabs { display: flex; flex: none; height: 27px; padding: 0 0 3px 2px; }
.tabs button { display: flex; align-items: center; gap: 4px; padding: 0 5px; border: 1px solid #aaa; border-top: 0; border-bottom-width: 2px; border-radius: 0 0 5px 5px; color: #6c6c6c; }
.tabs svg { width: 20px; height: 20px; }
.tabs .active { color: #000; background: #fff; }
.tabs .focused { outline: 1px dotted #222; outline-offset: -4px; }

.map { display: grid; grid-template: minmax(0, 1fr) 21px / minmax(0, 1fr) 20px; padding-bottom: 2px; border-left: 2px solid #808080; }
.canvas { border-top: 2px solid #6e6e6e; border-right: 2px solid #eee; background: #fff; }
.vscroll { display: flex; flex-direction: column; align-items: center; border-top: 2px solid #808080; background: #f0f0f0; }
.vscroll button { display: grid; place-items: center; flex: none; width: 18px; height: 21px; }
.vscroll svg { width: 10px; height: 10px; }
.vthumb { flex: none; width: 17px; height: 73%; margin-top: auto; background: #cdcdcd; }
.hstrip { grid-column: 1 / -1; display: flex; align-items: center; border-top: 1px solid #e3e3e3; background: #f0f0f0; }
.v { display: grid; place-items: center; flex: none; width: 21px; height: 19px; }
.v svg { width: 11px; height: 12px; }
.v.active { background: #bcdcf4; }
.hthumb { flex: 1; height: 17px; margin: 0 0 0 22px; background: #cdcdcd; }
.hstrip .v:last-child { width: 42px; padding-right: 20px; }

.search { display: flex; flex-direction: column; min-height: 0; }
.search-tools { display: flex; align-items: center; flex: none; height: 35px; border-bottom: 1px solid #c0c0c0; background: #f0f0f0; }
.search-tools .sep { width: 10px; height: 29px; }
.search-tools .combo { flex: 1; height: 29px; margin: 0 2px 0 9px; }
.search-tools select { border-color: #aaa; background: #e1e1e1; }
.search-tools .combo > svg { margin-right: 4px; }
.search-form { flex: none; height: 98px; padding: 5px 13px 0 11px; border-bottom: 1px solid #c0c0c0; background: #fff; }
a { color: #0a6cd6; }
.kinds { display: flex; gap: 24px; font-size: 11px; line-height: 26px; }
.query { display: flex; align-items: center; }
.query input { flex: 1; height: 29px; margin-right: 13px; border: 1px solid #aaa; border-top: 2px solid #696969; border-left: 2px solid #696969; background: #fff; }
.query button { width: 26px; margin-right: 16px; }
.query svg { width: 26px; height: 26px; }
.extent { display: flex; align-items: center; gap: 3px; height: 28px; font-size: 12px; }
.results { flex: 1; background: #fff; }

/* drawing toolbar and status */
.draw-row { align-items: center; }
.serif { font: bold 18px "Liberation Serif", serif; }
.serif.big { font-size: 22px; }
.italic { font-style: italic; }
.under { text-decoration: underline; }
.c { display: flex; flex-direction: column; align-items: center; justify-content: space-between; flex: none; width: 34px; height: 24px; }
.c svg { width: 18px; height: 18px; }
.c span { line-height: 18px; }
.swatch { width: 22px; height: 4px; }
.black { background: #000; }
.cream { background: #ffffb0; }
.green { background: #55ff00; }

.status { flex: none; display: flex; align-items: center; justify-content: flex-end; height: 26px; padding-right: 149px; background: #f0f0f0; }
.taskbar { flex: none; display: flex; height: 5px; background: #3a2e25; }
.task-window { width: 360px; margin-left: 60px; border-top: 1px solid #bbb; background: #f3f3f3; }
.task-item { width: 61px; margin-left: 436px; background: #5c5550; }

.watermark {
  position: absolute;
  right: 4px;
  bottom: 14px;
  font: 48px/60px "Liberation Sans", sans-serif;
  color: rgba(226, 226, 226, 0.75);
  text-shadow: 1px 1px 1px rgba(120, 120, 120, 0.7);
  pointer-events: none;
}
```
